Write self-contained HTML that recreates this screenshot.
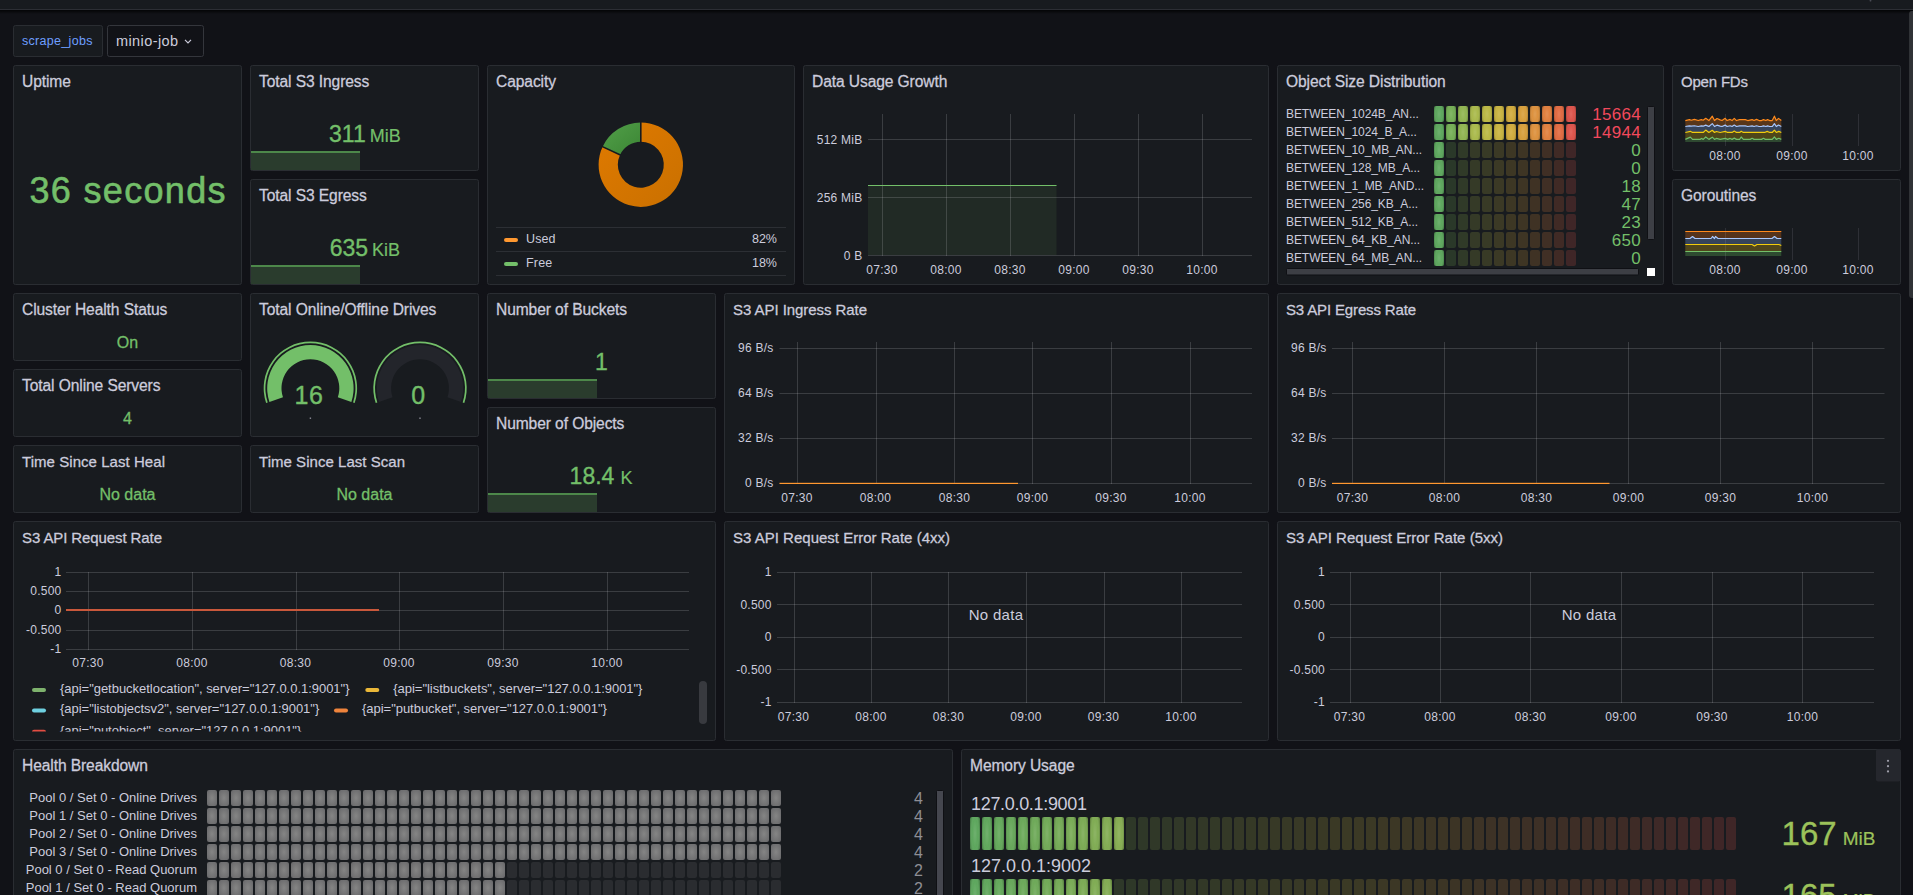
<!DOCTYPE html>
<html><head><meta charset="utf-8"><title>MinIO Dashboard</title>
<style>
html,body{margin:0;padding:0;background:#111217;overflow:hidden;width:1913px;height:895px}
svg{display:block;font-family:"Liberation Sans", sans-serif}
</style></head><body>
<svg width="1913" height="895" viewBox="0 0 1913 895">
<defs>
<linearGradient id="shadow" x1="0" y1="0" x2="0" y2="1"><stop offset="0" stop-color="#000" stop-opacity="0.6"/><stop offset="1" stop-color="#000" stop-opacity="0"/></linearGradient>
<linearGradient id="gOr" x1="0" y1="0" x2="1" y2="1"><stop offset="0" stop-color="#e07a00"/><stop offset="1" stop-color="#c97000"/></linearGradient>
<linearGradient id="gGr" x1="0" y1="0" x2="1" y2="1"><stop offset="0" stop-color="#52a049"/><stop offset="1" stop-color="#3b8534"/></linearGradient>
<radialGradient id="gGray" cx="0.5" cy="0.5" r="0.6"><stop offset="0" stop-color="#858585"/><stop offset="1" stop-color="#6b6b6d"/></radialGradient>
<radialGradient id="cellShade" cx="0.5" cy="0.5" r="0.5" gradientTransform="translate(0.5 0.5) scale(1 1.6) translate(-0.5 -0.5)"><stop offset="0" stop-color="#fff" stop-opacity="0.13"/><stop offset="0.55" stop-color="#fff" stop-opacity="0.02"/><stop offset="1" stop-color="#000" stop-opacity="0.18"/></radialGradient>
</defs>
<rect x="0" y="0" width="1913" height="895" fill="#111217"/>
<rect x="0" y="0" width="1913" height="9" fill="#181b1f"/>
<rect x="0" y="9" width="1913" height="1" fill="#2c2e34"/>
<rect x="0" y="10" width="1913" height="1" fill="#050608"/>
<rect x="0" y="11" width="1913" height="3" fill="url(#shadow)"/>
<rect x="1869.5" y="0" width="2" height="1.5" rx="0.7" fill="#4a4c55"/>
<rect x="1909" y="11" width="6" height="287" rx="3" fill="#303236"/>
<rect x="13.5" y="25.5" width="89" height="31" rx="2" fill="#181b1f" stroke="#2a2d32"/>
<text x="22" y="45" font-size="12.5" fill="#6e9fff" letter-spacing="0.3">scrape_jobs</text>
<rect x="107.5" y="25.5" width="96" height="31" rx="2" fill="#111217" stroke="#34363c"/>
<text x="116" y="45.5" font-size="14.5" fill="#ccccdc" letter-spacing="0.4">minio-job</text>
<path d="M185 39.8 L188 42.8 L191 39.8" fill="none" stroke="#ccccdc" stroke-width="1.2"/>
<rect x="13.5" y="65.5" width="228" height="219" rx="2" fill="#181b1f" stroke="#2a2d32" stroke-width="1"/>
<text x="22" y="87" font-size="15.6" fill="#ccccdc" letter-spacing="-0.1" stroke="#ccccdc" stroke-width="0.28">Uptime</text>
<rect x="250.5" y="65.5" width="228" height="105" rx="2" fill="#181b1f" stroke="#2a2d32" stroke-width="1"/>
<text x="259" y="87" font-size="15.6" fill="#ccccdc" letter-spacing="-0.1" stroke="#ccccdc" stroke-width="0.28">Total S3 Ingress</text>
<rect x="250.5" y="179.5" width="228" height="105" rx="2" fill="#181b1f" stroke="#2a2d32" stroke-width="1"/>
<text x="259" y="201" font-size="15.6" fill="#ccccdc" letter-spacing="-0.1" stroke="#ccccdc" stroke-width="0.28">Total S3 Egress</text>
<rect x="487.5" y="65.5" width="307" height="219" rx="2" fill="#181b1f" stroke="#2a2d32" stroke-width="1"/>
<text x="496" y="87" font-size="15.6" fill="#ccccdc" letter-spacing="-0.1" stroke="#ccccdc" stroke-width="0.28">Capacity</text>
<rect x="803.5" y="65.5" width="465" height="219" rx="2" fill="#181b1f" stroke="#2a2d32" stroke-width="1"/>
<text x="812" y="87" font-size="15.6" fill="#ccccdc" letter-spacing="-0.1" stroke="#ccccdc" stroke-width="0.28">Data Usage Growth</text>
<rect x="1277.5" y="65.5" width="386" height="219" rx="2" fill="#181b1f" stroke="#2a2d32" stroke-width="1"/>
<text x="1286" y="87" font-size="15.6" fill="#ccccdc" letter-spacing="-0.1" stroke="#ccccdc" stroke-width="0.28">Object Size Distribution</text>
<rect x="1672.5" y="65.5" width="228" height="105" rx="2" fill="#181b1f" stroke="#2a2d32" stroke-width="1"/>
<text x="1681" y="87" font-size="15.0" fill="#ccccdc" textLength="67" lengthAdjust="spacing" stroke="#ccccdc" stroke-width="0.28">Open FDs</text>
<rect x="1672.5" y="179.5" width="228" height="105" rx="2" fill="#181b1f" stroke="#2a2d32" stroke-width="1"/>
<text x="1681" y="201" font-size="15.6" fill="#ccccdc" letter-spacing="-0.1" stroke="#ccccdc" stroke-width="0.28">Goroutines</text>
<rect x="13.5" y="293.5" width="228" height="67" rx="2" fill="#181b1f" stroke="#2a2d32" stroke-width="1"/>
<text x="22" y="315" font-size="15.6" fill="#ccccdc" letter-spacing="-0.1" stroke="#ccccdc" stroke-width="0.28">Cluster Health Status</text>
<rect x="13.5" y="369.5" width="228" height="67" rx="2" fill="#181b1f" stroke="#2a2d32" stroke-width="1"/>
<text x="22" y="391" font-size="15.6" fill="#ccccdc" letter-spacing="-0.1" stroke="#ccccdc" stroke-width="0.28">Total Online Servers</text>
<rect x="13.5" y="445.5" width="228" height="67" rx="2" fill="#181b1f" stroke="#2a2d32" stroke-width="1"/>
<text x="22" y="467" font-size="15.0" fill="#ccccdc" textLength="143" lengthAdjust="spacing" stroke="#ccccdc" stroke-width="0.28">Time Since Last Heal</text>
<rect x="250.5" y="293.5" width="228" height="143" rx="2" fill="#181b1f" stroke="#2a2d32" stroke-width="1"/>
<text x="259" y="315" font-size="15.6" fill="#ccccdc" letter-spacing="-0.1" stroke="#ccccdc" stroke-width="0.28">Total Online/Offline Drives</text>
<rect x="250.5" y="445.5" width="228" height="67" rx="2" fill="#181b1f" stroke="#2a2d32" stroke-width="1"/>
<text x="259" y="467" font-size="15.0" fill="#ccccdc" textLength="146" lengthAdjust="spacing" stroke="#ccccdc" stroke-width="0.28">Time Since Last Scan</text>
<rect x="487.5" y="293.5" width="228" height="105" rx="2" fill="#181b1f" stroke="#2a2d32" stroke-width="1"/>
<text x="496" y="315" font-size="15.6" fill="#ccccdc" letter-spacing="-0.1" stroke="#ccccdc" stroke-width="0.28">Number of Buckets</text>
<rect x="487.5" y="407.5" width="228" height="105" rx="2" fill="#181b1f" stroke="#2a2d32" stroke-width="1"/>
<text x="496" y="429" font-size="15.6" fill="#ccccdc" letter-spacing="-0.1" stroke="#ccccdc" stroke-width="0.28">Number of Objects</text>
<rect x="724.5" y="293.5" width="544" height="219" rx="2" fill="#181b1f" stroke="#2a2d32" stroke-width="1"/>
<text x="733" y="315" font-size="15.0" fill="#ccccdc" textLength="134" lengthAdjust="spacing" stroke="#ccccdc" stroke-width="0.28">S3 API Ingress Rate</text>
<rect x="1277.5" y="293.5" width="623" height="219" rx="2" fill="#181b1f" stroke="#2a2d32" stroke-width="1"/>
<text x="1286" y="315" font-size="15.0" fill="#ccccdc" textLength="130" lengthAdjust="spacing" stroke="#ccccdc" stroke-width="0.28">S3 API Egress Rate</text>
<rect x="13.5" y="521.5" width="702" height="219" rx="2" fill="#181b1f" stroke="#2a2d32" stroke-width="1"/>
<text x="22" y="543" font-size="15.0" fill="#ccccdc" textLength="140" lengthAdjust="spacing" stroke="#ccccdc" stroke-width="0.28">S3 API Request Rate</text>
<rect x="724.5" y="521.5" width="544" height="219" rx="2" fill="#181b1f" stroke="#2a2d32" stroke-width="1"/>
<text x="733" y="543" font-size="15.0" fill="#ccccdc" textLength="217" lengthAdjust="spacing" stroke="#ccccdc" stroke-width="0.28">S3 API Request Error Rate (4xx)</text>
<rect x="1277.5" y="521.5" width="623" height="219" rx="2" fill="#181b1f" stroke="#2a2d32" stroke-width="1"/>
<text x="1286" y="543" font-size="15.0" fill="#ccccdc" textLength="217" lengthAdjust="spacing" stroke="#ccccdc" stroke-width="0.28">S3 API Request Error Rate (5xx)</text>
<rect x="13.5" y="749.5" width="939" height="219" rx="2" fill="#181b1f" stroke="#2a2d32" stroke-width="1"/>
<text x="22" y="771" font-size="15.6" fill="#ccccdc" letter-spacing="-0.1" stroke="#ccccdc" stroke-width="0.28">Health Breakdown</text>
<rect x="961.5" y="749.5" width="939" height="219" rx="2" fill="#181b1f" stroke="#2a2d32" stroke-width="1"/>
<text x="970" y="771" font-size="15.6" fill="#ccccdc" letter-spacing="-0.1" stroke="#ccccdc" stroke-width="0.28">Memory Usage</text>
<text x="127.5" y="203" font-size="36" fill="#73bf69" text-anchor="middle" textLength="196" lengthAdjust="spacing" stroke="#73bf69" stroke-width="0.6">36 seconds</text>
<rect x="251" y="153" width="109" height="17" fill="#2a3c2d"/>
<rect x="251" y="151" width="109" height="2" fill="#4d884a"/>
<text x="364.9" y="142.2" font-size="23" fill="#73bf69" stroke="#73bf69" stroke-width="0.35" text-anchor="middle" letter-spacing="0">311<tspan font-size="18" dx="4" stroke-width="0.2">MiB</tspan></text>
<rect x="251" y="267" width="109" height="17" fill="#2a3c2d"/>
<rect x="251" y="265" width="109" height="2" fill="#4d884a"/>
<text x="364.9" y="256.2" font-size="23" fill="#73bf69" stroke="#73bf69" stroke-width="0.35" text-anchor="middle" letter-spacing="0">635<tspan font-size="18" dx="4" stroke-width="0.2">KiB</tspan></text>
<path d="M640.80 122.50 A42.2 42.2 0 1 1 602.62 146.73 L619.99 154.91 A23 23 0 1 0 640.80 141.70 Z" fill="url(#gOr)"/>
<path d="M602.62 146.73 A42.2 42.2 0 0 1 640.80 122.50 L640.80 141.70 A23 23 0 0 0 619.99 154.91 Z" fill="url(#gGr)"/>
<line x1="640.80" y1="142.70" x2="640.80" y2="121.70" stroke="#181b1f" stroke-width="1.6"/>
<line x1="620.89" y1="155.33" x2="601.89" y2="146.39" stroke="#181b1f" stroke-width="1.6"/>
<rect x="496" y="227" width="290" height="1" fill="#2c2f34"/>
<rect x="496" y="251" width="290" height="1" fill="#2c2f34"/>
<rect x="496" y="275" width="290" height="1" fill="#2c2f34"/>
<rect x="504" y="238" width="14" height="4" fill="#ff9830" rx="2"/>
<text x="526" y="243" font-size="12.5" fill="#ccccdc" letter-spacing="0.1">Used</text>
<text x="777" y="243" font-size="12.5" fill="#ccccdc" text-anchor="end" letter-spacing="0">82%</text>
<rect x="504" y="262" width="14" height="4" fill="#73bf69" rx="2"/>
<text x="526" y="267" font-size="12.5" fill="#ccccdc" letter-spacing="0.2">Free</text>
<text x="777" y="267" font-size="12.5" fill="#ccccdc" text-anchor="end" letter-spacing="0">18%</text>
<rect x="868" y="185" width="188.5" height="70" fill="#212a25"/>
<rect x="868" y="139" width="384" height="1" fill="rgba(230,230,235,0.17)"/>
<rect x="868" y="197" width="384" height="1" fill="rgba(230,230,235,0.17)"/>
<rect x="868" y="255" width="384" height="1" fill="rgba(230,230,235,0.17)"/>
<rect x="882" y="114" width="1" height="142" fill="rgba(230,230,235,0.17)"/>
<rect x="946" y="114" width="1" height="142" fill="rgba(230,230,235,0.17)"/>
<rect x="1010" y="114" width="1" height="142" fill="rgba(230,230,235,0.17)"/>
<rect x="1074" y="114" width="1" height="142" fill="rgba(230,230,235,0.17)"/>
<rect x="1138" y="114" width="1" height="142" fill="rgba(230,230,235,0.17)"/>
<rect x="1202" y="114" width="1" height="142" fill="rgba(230,230,235,0.17)"/>
<rect x="868" y="185" width="188.5" height="1" fill="#73bf69"/>
<text x="862.5" y="143.5" font-size="12" fill="#ccccdc" text-anchor="end" letter-spacing="0.25">512 MiB</text>
<text x="862.5" y="201.5" font-size="12" fill="#ccccdc" text-anchor="end" letter-spacing="0.25">256 MiB</text>
<text x="862.5" y="259.5" font-size="12" fill="#ccccdc" text-anchor="end" letter-spacing="0.25">0 B</text>
<text x="882" y="274" font-size="12" fill="#ccccdc" text-anchor="middle" letter-spacing="0.25">07:30</text>
<text x="946" y="274" font-size="12" fill="#ccccdc" text-anchor="middle" letter-spacing="0.25">08:00</text>
<text x="1010" y="274" font-size="12" fill="#ccccdc" text-anchor="middle" letter-spacing="0.25">08:30</text>
<text x="1074" y="274" font-size="12" fill="#ccccdc" text-anchor="middle" letter-spacing="0.25">09:00</text>
<text x="1138" y="274" font-size="12" fill="#ccccdc" text-anchor="middle" letter-spacing="0.25">09:30</text>
<text x="1202" y="274" font-size="12" fill="#ccccdc" text-anchor="middle" letter-spacing="0.25">10:00</text>
<text x="1286" y="118" font-size="12" fill="#ccccdc" letter-spacing="-0.07">BETWEEN_1024B_AN...</text>
<rect x="1434" y="106" width="10" height="16" fill="#5aa55a" rx="2"/>
<rect x="1434" y="106" width="10" height="16" rx="2" fill="url(#cellShade)"/>
<rect x="1446" y="106" width="10" height="16" fill="#72ad52" rx="2"/>
<rect x="1446" y="106" width="10" height="16" rx="2" fill="url(#cellShade)"/>
<rect x="1458" y="106" width="10" height="16" fill="#8fb44e" rx="2"/>
<rect x="1458" y="106" width="10" height="16" rx="2" fill="url(#cellShade)"/>
<rect x="1470" y="106" width="10" height="16" fill="#a8b848" rx="2"/>
<rect x="1470" y="106" width="10" height="16" rx="2" fill="url(#cellShade)"/>
<rect x="1482" y="106" width="10" height="16" fill="#bab741" rx="2"/>
<rect x="1482" y="106" width="10" height="16" rx="2" fill="url(#cellShade)"/>
<rect x="1494" y="106" width="10" height="16" fill="#c7b23d" rx="2"/>
<rect x="1494" y="106" width="10" height="16" rx="2" fill="url(#cellShade)"/>
<rect x="1506" y="106" width="10" height="16" fill="#d0a939" rx="2"/>
<rect x="1506" y="106" width="10" height="16" rx="2" fill="url(#cellShade)"/>
<rect x="1518" y="106" width="10" height="16" fill="#d79e38" rx="2"/>
<rect x="1518" y="106" width="10" height="16" rx="2" fill="url(#cellShade)"/>
<rect x="1530" y="106" width="10" height="16" fill="#dc8f3a" rx="2"/>
<rect x="1530" y="106" width="10" height="16" rx="2" fill="url(#cellShade)"/>
<rect x="1542" y="106" width="10" height="16" fill="#df7d3b" rx="2"/>
<rect x="1542" y="106" width="10" height="16" rx="2" fill="url(#cellShade)"/>
<rect x="1554" y="106" width="10" height="16" fill="#e0683e" rx="2"/>
<rect x="1554" y="106" width="10" height="16" rx="2" fill="url(#cellShade)"/>
<rect x="1566" y="106" width="10" height="16" fill="#dc5047" rx="2"/>
<rect x="1566" y="106" width="10" height="16" rx="2" fill="url(#cellShade)"/>
<text x="1641" y="119.5" font-size="17" fill="#f2495c" text-anchor="end" letter-spacing="0.3">15664</text>
<text x="1286" y="136" font-size="12" fill="#ccccdc" letter-spacing="-0.07">BETWEEN_1024_B_A...</text>
<rect x="1434" y="124" width="10" height="16" fill="#5aa55a" rx="2"/>
<rect x="1434" y="124" width="10" height="16" rx="2" fill="url(#cellShade)"/>
<rect x="1446" y="124" width="10" height="16" fill="#72ad52" rx="2"/>
<rect x="1446" y="124" width="10" height="16" rx="2" fill="url(#cellShade)"/>
<rect x="1458" y="124" width="10" height="16" fill="#8fb44e" rx="2"/>
<rect x="1458" y="124" width="10" height="16" rx="2" fill="url(#cellShade)"/>
<rect x="1470" y="124" width="10" height="16" fill="#a8b848" rx="2"/>
<rect x="1470" y="124" width="10" height="16" rx="2" fill="url(#cellShade)"/>
<rect x="1482" y="124" width="10" height="16" fill="#bab741" rx="2"/>
<rect x="1482" y="124" width="10" height="16" rx="2" fill="url(#cellShade)"/>
<rect x="1494" y="124" width="10" height="16" fill="#c7b23d" rx="2"/>
<rect x="1494" y="124" width="10" height="16" rx="2" fill="url(#cellShade)"/>
<rect x="1506" y="124" width="10" height="16" fill="#d0a939" rx="2"/>
<rect x="1506" y="124" width="10" height="16" rx="2" fill="url(#cellShade)"/>
<rect x="1518" y="124" width="10" height="16" fill="#d79e38" rx="2"/>
<rect x="1518" y="124" width="10" height="16" rx="2" fill="url(#cellShade)"/>
<rect x="1530" y="124" width="10" height="16" fill="#dc8f3a" rx="2"/>
<rect x="1530" y="124" width="10" height="16" rx="2" fill="url(#cellShade)"/>
<rect x="1542" y="124" width="10" height="16" fill="#df7d3b" rx="2"/>
<rect x="1542" y="124" width="10" height="16" rx="2" fill="url(#cellShade)"/>
<rect x="1554" y="124" width="10" height="16" fill="#e0683e" rx="2"/>
<rect x="1554" y="124" width="10" height="16" rx="2" fill="url(#cellShade)"/>
<rect x="1566" y="124" width="10" height="16" fill="#dc5047" rx="2"/>
<rect x="1566" y="124" width="10" height="16" rx="2" fill="url(#cellShade)"/>
<text x="1641" y="137.5" font-size="17" fill="#f2495c" text-anchor="end" letter-spacing="0.3">14944</text>
<text x="1286" y="154" font-size="12" fill="#ccccdc" letter-spacing="-0.07">BETWEEN_10_MB_AN...</text>
<rect x="1434" y="142" width="10" height="16" fill="#5aa55a" rx="2"/>
<rect x="1434" y="142" width="10" height="16" rx="2" fill="url(#cellShade)"/>
<rect x="1446" y="142" width="10" height="16" fill="#2a3829" rx="2"/>
<rect x="1458" y="142" width="10" height="16" fill="#303a28" rx="2"/>
<rect x="1470" y="142" width="10" height="16" fill="#353a27" rx="2"/>
<rect x="1482" y="142" width="10" height="16" fill="#383a26" rx="2"/>
<rect x="1494" y="142" width="10" height="16" fill="#3b3925" rx="2"/>
<rect x="1506" y="142" width="10" height="16" fill="#3d3724" rx="2"/>
<rect x="1518" y="142" width="10" height="16" fill="#3e3524" rx="2"/>
<rect x="1530" y="142" width="10" height="16" fill="#3f3224" rx="2"/>
<rect x="1542" y="142" width="10" height="16" fill="#402f25" rx="2"/>
<rect x="1554" y="142" width="10" height="16" fill="#402a25" rx="2"/>
<rect x="1566" y="142" width="10" height="16" fill="#3f2627" rx="2"/>
<text x="1641" y="155.5" font-size="17" fill="#73bf69" text-anchor="end" letter-spacing="0.3">0</text>
<text x="1286" y="172" font-size="12" fill="#ccccdc" letter-spacing="-0.07">BETWEEN_128_MB_A...</text>
<rect x="1434" y="160" width="10" height="16" fill="#5aa55a" rx="2"/>
<rect x="1434" y="160" width="10" height="16" rx="2" fill="url(#cellShade)"/>
<rect x="1446" y="160" width="10" height="16" fill="#2a3829" rx="2"/>
<rect x="1458" y="160" width="10" height="16" fill="#303a28" rx="2"/>
<rect x="1470" y="160" width="10" height="16" fill="#353a27" rx="2"/>
<rect x="1482" y="160" width="10" height="16" fill="#383a26" rx="2"/>
<rect x="1494" y="160" width="10" height="16" fill="#3b3925" rx="2"/>
<rect x="1506" y="160" width="10" height="16" fill="#3d3724" rx="2"/>
<rect x="1518" y="160" width="10" height="16" fill="#3e3524" rx="2"/>
<rect x="1530" y="160" width="10" height="16" fill="#3f3224" rx="2"/>
<rect x="1542" y="160" width="10" height="16" fill="#402f25" rx="2"/>
<rect x="1554" y="160" width="10" height="16" fill="#402a25" rx="2"/>
<rect x="1566" y="160" width="10" height="16" fill="#3f2627" rx="2"/>
<text x="1641" y="173.5" font-size="17" fill="#73bf69" text-anchor="end" letter-spacing="0.3">0</text>
<text x="1286" y="190" font-size="12" fill="#ccccdc" letter-spacing="-0.07">BETWEEN_1_MB_AND...</text>
<rect x="1434" y="178" width="10" height="16" fill="#5aa55a" rx="2"/>
<rect x="1434" y="178" width="10" height="16" rx="2" fill="url(#cellShade)"/>
<rect x="1446" y="178" width="10" height="16" fill="#2a3829" rx="2"/>
<rect x="1458" y="178" width="10" height="16" fill="#303a28" rx="2"/>
<rect x="1470" y="178" width="10" height="16" fill="#353a27" rx="2"/>
<rect x="1482" y="178" width="10" height="16" fill="#383a26" rx="2"/>
<rect x="1494" y="178" width="10" height="16" fill="#3b3925" rx="2"/>
<rect x="1506" y="178" width="10" height="16" fill="#3d3724" rx="2"/>
<rect x="1518" y="178" width="10" height="16" fill="#3e3524" rx="2"/>
<rect x="1530" y="178" width="10" height="16" fill="#3f3224" rx="2"/>
<rect x="1542" y="178" width="10" height="16" fill="#402f25" rx="2"/>
<rect x="1554" y="178" width="10" height="16" fill="#402a25" rx="2"/>
<rect x="1566" y="178" width="10" height="16" fill="#3f2627" rx="2"/>
<text x="1641" y="191.5" font-size="17" fill="#73bf69" text-anchor="end" letter-spacing="0.3">18</text>
<text x="1286" y="208" font-size="12" fill="#ccccdc" letter-spacing="-0.07">BETWEEN_256_KB_A...</text>
<rect x="1434" y="196" width="10" height="16" fill="#5aa55a" rx="2"/>
<rect x="1434" y="196" width="10" height="16" rx="2" fill="url(#cellShade)"/>
<rect x="1446" y="196" width="10" height="16" fill="#2a3829" rx="2"/>
<rect x="1458" y="196" width="10" height="16" fill="#303a28" rx="2"/>
<rect x="1470" y="196" width="10" height="16" fill="#353a27" rx="2"/>
<rect x="1482" y="196" width="10" height="16" fill="#383a26" rx="2"/>
<rect x="1494" y="196" width="10" height="16" fill="#3b3925" rx="2"/>
<rect x="1506" y="196" width="10" height="16" fill="#3d3724" rx="2"/>
<rect x="1518" y="196" width="10" height="16" fill="#3e3524" rx="2"/>
<rect x="1530" y="196" width="10" height="16" fill="#3f3224" rx="2"/>
<rect x="1542" y="196" width="10" height="16" fill="#402f25" rx="2"/>
<rect x="1554" y="196" width="10" height="16" fill="#402a25" rx="2"/>
<rect x="1566" y="196" width="10" height="16" fill="#3f2627" rx="2"/>
<text x="1641" y="209.5" font-size="17" fill="#73bf69" text-anchor="end" letter-spacing="0.3">47</text>
<text x="1286" y="226" font-size="12" fill="#ccccdc" letter-spacing="-0.07">BETWEEN_512_KB_A...</text>
<rect x="1434" y="214" width="10" height="16" fill="#5aa55a" rx="2"/>
<rect x="1434" y="214" width="10" height="16" rx="2" fill="url(#cellShade)"/>
<rect x="1446" y="214" width="10" height="16" fill="#2a3829" rx="2"/>
<rect x="1458" y="214" width="10" height="16" fill="#303a28" rx="2"/>
<rect x="1470" y="214" width="10" height="16" fill="#353a27" rx="2"/>
<rect x="1482" y="214" width="10" height="16" fill="#383a26" rx="2"/>
<rect x="1494" y="214" width="10" height="16" fill="#3b3925" rx="2"/>
<rect x="1506" y="214" width="10" height="16" fill="#3d3724" rx="2"/>
<rect x="1518" y="214" width="10" height="16" fill="#3e3524" rx="2"/>
<rect x="1530" y="214" width="10" height="16" fill="#3f3224" rx="2"/>
<rect x="1542" y="214" width="10" height="16" fill="#402f25" rx="2"/>
<rect x="1554" y="214" width="10" height="16" fill="#402a25" rx="2"/>
<rect x="1566" y="214" width="10" height="16" fill="#3f2627" rx="2"/>
<text x="1641" y="227.5" font-size="17" fill="#73bf69" text-anchor="end" letter-spacing="0.3">23</text>
<text x="1286" y="244" font-size="12" fill="#ccccdc" letter-spacing="-0.07">BETWEEN_64_KB_AN...</text>
<rect x="1434" y="232" width="10" height="16" fill="#5aa55a" rx="2"/>
<rect x="1434" y="232" width="10" height="16" rx="2" fill="url(#cellShade)"/>
<rect x="1446" y="232" width="10" height="16" fill="#2a3829" rx="2"/>
<rect x="1458" y="232" width="10" height="16" fill="#303a28" rx="2"/>
<rect x="1470" y="232" width="10" height="16" fill="#353a27" rx="2"/>
<rect x="1482" y="232" width="10" height="16" fill="#383a26" rx="2"/>
<rect x="1494" y="232" width="10" height="16" fill="#3b3925" rx="2"/>
<rect x="1506" y="232" width="10" height="16" fill="#3d3724" rx="2"/>
<rect x="1518" y="232" width="10" height="16" fill="#3e3524" rx="2"/>
<rect x="1530" y="232" width="10" height="16" fill="#3f3224" rx="2"/>
<rect x="1542" y="232" width="10" height="16" fill="#402f25" rx="2"/>
<rect x="1554" y="232" width="10" height="16" fill="#402a25" rx="2"/>
<rect x="1566" y="232" width="10" height="16" fill="#3f2627" rx="2"/>
<text x="1641" y="245.5" font-size="17" fill="#73bf69" text-anchor="end" letter-spacing="0.3">650</text>
<text x="1286" y="262" font-size="12" fill="#ccccdc" letter-spacing="-0.07">BETWEEN_64_MB_AN...</text>
<rect x="1434" y="250" width="10" height="16" fill="#5aa55a" rx="2"/>
<rect x="1434" y="250" width="10" height="16" rx="2" fill="url(#cellShade)"/>
<rect x="1446" y="250" width="10" height="16" fill="#2a3829" rx="2"/>
<rect x="1458" y="250" width="10" height="16" fill="#303a28" rx="2"/>
<rect x="1470" y="250" width="10" height="16" fill="#353a27" rx="2"/>
<rect x="1482" y="250" width="10" height="16" fill="#383a26" rx="2"/>
<rect x="1494" y="250" width="10" height="16" fill="#3b3925" rx="2"/>
<rect x="1506" y="250" width="10" height="16" fill="#3d3724" rx="2"/>
<rect x="1518" y="250" width="10" height="16" fill="#3e3524" rx="2"/>
<rect x="1530" y="250" width="10" height="16" fill="#3f3224" rx="2"/>
<rect x="1542" y="250" width="10" height="16" fill="#402f25" rx="2"/>
<rect x="1554" y="250" width="10" height="16" fill="#402a25" rx="2"/>
<rect x="1566" y="250" width="10" height="16" fill="#3f2627" rx="2"/>
<text x="1641" y="263.5" font-size="17" fill="#73bf69" text-anchor="end" letter-spacing="0.3">0</text>
<rect x="1647.5" y="106.5" width="7" height="133" rx="1" fill="#3d3f45" stroke="#0f1014" stroke-width="1"/>
<rect x="1286.5" y="268.5" width="352" height="6.5" rx="1" fill="#3d3f45" stroke="#0f1014" stroke-width="1"/>
<rect x="1647" y="268" width="8" height="8" fill="#ffffff"/>
<path d="M1685.33 120.55 L1689.41 119.61 L1691.29 120.23 L1694.43 119.42 L1698.19 120.55 L1701.33 119.61 L1703.21 120.23 L1705.72 118.35 L1708.86 120.55 L1712.31 116.16 L1714.50 120.55 L1717.01 118.54 L1720.15 119.92 L1722.03 120.55 L1725.17 118.35 L1727.05 120.55 L1730.19 119.42 L1732.07 120.55 L1734.27 118.35 L1736.46 120.55 L1739.60 119.61 L1742.11 119.61 L1745.24 119.61 L1747.75 120.55 L1752.15 119.61 L1754.03 120.55 L1756.54 119.42 L1759.05 120.55 L1761.56 120.55 L1763.44 119.61 L1765.95 120.55 L1767.52 119.61 L1769.71 120.55 L1772.22 120.55 L1774.42 116.16 L1776.30 120.55 L1778.49 118.35 L1781.32 120.55 L1781.32 126.51 L1778.49 125.08 L1776.30 126.51 L1774.42 123.65 L1772.22 126.51 L1769.71 126.51 L1767.52 125.90 L1765.95 126.51 L1763.44 125.90 L1761.56 126.51 L1759.05 126.51 L1756.54 125.77 L1754.03 126.51 L1752.15 125.90 L1747.75 126.51 L1745.24 125.90 L1742.11 125.90 L1739.60 125.90 L1736.46 126.51 L1734.27 125.08 L1732.07 126.51 L1730.19 125.77 L1727.05 126.51 L1725.17 125.08 L1722.03 126.51 L1720.15 126.10 L1717.01 125.20 L1714.50 126.51 L1712.31 123.65 L1708.86 126.51 L1705.72 125.08 L1703.21 126.19 L1701.33 125.90 L1698.19 126.51 L1694.43 125.77 L1691.29 126.19 L1689.41 125.90 L1685.33 126.51 Z" fill="#58361a"/>
<path d="M1685.33 126.51 L1689.41 125.90 L1691.29 126.19 L1694.43 125.77 L1698.19 126.51 L1701.33 125.90 L1703.21 126.19 L1705.72 125.08 L1708.86 126.51 L1712.31 123.65 L1714.50 126.51 L1717.01 125.20 L1720.15 126.10 L1722.03 126.51 L1725.17 125.08 L1727.05 126.51 L1730.19 125.77 L1732.07 126.51 L1734.27 125.08 L1736.46 126.51 L1739.60 125.90 L1742.11 125.90 L1745.24 125.90 L1747.75 126.51 L1752.15 125.90 L1754.03 126.51 L1756.54 125.77 L1759.05 126.51 L1761.56 126.51 L1763.44 125.90 L1765.95 126.51 L1767.52 125.90 L1769.71 126.51 L1772.22 126.51 L1774.42 123.65 L1776.30 126.51 L1778.49 125.08 L1781.32 126.51 L1781.32 132.47 L1778.81 131.34 L1776.30 132.47 L1774.42 130.08 L1772.22 132.47 L1769.71 132.47 L1767.20 131.34 L1764.69 132.47 L1743.36 132.47 L1741.17 131.21 L1739.60 132.47 L1736.46 132.47 L1734.27 131.09 L1732.07 132.47 L1727.68 132.47 L1725.17 131.34 L1720.15 132.47 L1716.39 131.53 L1714.50 132.47 L1712.31 130.27 L1708.86 132.47 L1705.72 130.08 L1703.21 132.47 L1692.55 132.47 L1690.35 131.34 L1685.33 132.47 Z" fill="#36445c"/>
<path d="M1685.33 132.47 L1690.35 131.34 L1692.55 132.47 L1703.21 132.47 L1705.72 130.08 L1708.86 132.47 L1712.31 130.27 L1714.50 132.47 L1716.39 131.53 L1720.15 132.47 L1725.17 131.34 L1727.68 132.47 L1732.07 132.47 L1734.27 131.09 L1736.46 132.47 L1739.60 132.47 L1741.17 131.21 L1743.36 132.47 L1764.69 132.47 L1767.20 131.34 L1769.71 132.47 L1772.22 132.47 L1774.42 130.08 L1776.30 132.47 L1778.81 131.34 L1781.32 132.47 L1781.32 139.37 L1778.81 138.24 L1776.30 139.37 L1774.42 136.98 L1772.22 139.37 L1765.32 139.37 L1763.44 138.24 L1761.56 139.37 L1754.03 139.37 L1752.15 138.24 L1750.26 139.37 L1743.36 139.37 L1741.17 136.98 L1739.60 139.37 L1736.46 139.37 L1734.27 138.11 L1732.07 139.37 L1730.19 138.43 L1727.68 139.37 L1725.17 138.43 L1720.15 139.37 L1716.39 138.43 L1714.50 139.37 L1712.31 137.17 L1708.86 139.37 L1705.72 136.98 L1703.21 139.37 L1701.64 138.43 L1700.08 139.37 L1692.55 139.37 L1690.35 137.17 L1685.33 139.37 Z" fill="#4f4619"/>
<path d="M1685.33 139.37 L1690.35 137.17 L1692.55 139.37 L1700.08 139.37 L1701.64 138.43 L1703.21 139.37 L1705.72 136.98 L1708.86 139.37 L1712.31 137.17 L1714.50 139.37 L1716.39 138.43 L1720.15 139.37 L1725.17 138.43 L1727.68 139.37 L1730.19 138.43 L1732.07 139.37 L1734.27 138.11 L1736.46 139.37 L1739.60 139.37 L1741.17 136.98 L1743.36 139.37 L1750.26 139.37 L1752.15 138.24 L1754.03 139.37 L1761.56 139.37 L1763.44 138.24 L1765.32 139.37 L1772.22 139.37 L1774.42 136.98 L1776.30 139.37 L1778.81 138.24 L1781.32 139.37 L1781.30 141.90 L1685.30 141.90 Z" fill="#2e4830"/>
<rect x="1725" y="114" width="1" height="32" fill="rgba(204,204,220,0.12)"/>
<rect x="1792" y="114" width="1" height="32" fill="rgba(204,204,220,0.12)"/>
<rect x="1858" y="114" width="1" height="32" fill="rgba(204,204,220,0.12)"/>
<path d="M1685.33 120.55 L1689.41 119.61 L1691.29 120.23 L1694.43 119.42 L1698.19 120.55 L1701.33 119.61 L1703.21 120.23 L1705.72 118.35 L1708.86 120.55 L1712.31 116.16 L1714.50 120.55 L1717.01 118.54 L1720.15 119.92 L1722.03 120.55 L1725.17 118.35 L1727.05 120.55 L1730.19 119.42 L1732.07 120.55 L1734.27 118.35 L1736.46 120.55 L1739.60 119.61 L1742.11 119.61 L1745.24 119.61 L1747.75 120.55 L1752.15 119.61 L1754.03 120.55 L1756.54 119.42 L1759.05 120.55 L1761.56 120.55 L1763.44 119.61 L1765.95 120.55 L1767.52 119.61 L1769.71 120.55 L1772.22 120.55 L1774.42 116.16 L1776.30 120.55 L1778.49 118.35 L1781.32 120.55" fill="none" stroke="#ff8a1c" stroke-width="1.2" stroke-linejoin="round"/>
<path d="M1685.33 126.51 L1689.41 125.90 L1691.29 126.19 L1694.43 125.77 L1698.19 126.51 L1701.33 125.90 L1703.21 126.19 L1705.72 125.08 L1708.86 126.51 L1712.31 123.65 L1714.50 126.51 L1717.01 125.20 L1720.15 126.10 L1722.03 126.51 L1725.17 125.08 L1727.05 126.51 L1730.19 125.77 L1732.07 126.51 L1734.27 125.08 L1736.46 126.51 L1739.60 125.90 L1742.11 125.90 L1745.24 125.90 L1747.75 126.51 L1752.15 125.90 L1754.03 126.51 L1756.54 125.77 L1759.05 126.51 L1761.56 126.51 L1763.44 125.90 L1765.95 126.51 L1767.52 125.90 L1769.71 126.51 L1772.22 126.51 L1774.42 123.65 L1776.30 126.51 L1778.49 125.08 L1781.32 126.51" fill="none" stroke="#a8c8ff" stroke-width="1.2" stroke-linejoin="round"/>
<path d="M1685.33 132.47 L1690.35 131.34 L1692.55 132.47 L1703.21 132.47 L1705.72 130.08 L1708.86 132.47 L1712.31 130.27 L1714.50 132.47 L1716.39 131.53 L1720.15 132.47 L1725.17 131.34 L1727.68 132.47 L1732.07 132.47 L1734.27 131.09 L1736.46 132.47 L1739.60 132.47 L1741.17 131.21 L1743.36 132.47 L1764.69 132.47 L1767.20 131.34 L1769.71 132.47 L1772.22 132.47 L1774.42 130.08 L1776.30 132.47 L1778.81 131.34 L1781.32 132.47" fill="none" stroke="#f2cc0c" stroke-width="1.2" stroke-linejoin="round"/>
<path d="M1685.33 139.37 L1690.35 137.17 L1692.55 139.37 L1700.08 139.37 L1701.64 138.43 L1703.21 139.37 L1705.72 136.98 L1708.86 139.37 L1712.31 137.17 L1714.50 139.37 L1716.39 138.43 L1720.15 139.37 L1725.17 138.43 L1727.68 139.37 L1730.19 138.43 L1732.07 139.37 L1734.27 138.11 L1736.46 139.37 L1739.60 139.37 L1741.17 136.98 L1743.36 139.37 L1750.26 139.37 L1752.15 138.24 L1754.03 139.37 L1761.56 139.37 L1763.44 138.24 L1765.32 139.37 L1772.22 139.37 L1774.42 136.98 L1776.30 139.37 L1778.81 138.24 L1781.32 139.37" fill="none" stroke="#73bf69" stroke-width="1.2" stroke-linejoin="round"/>
<text x="1725" y="159.7" font-size="12" fill="#ccccdc" text-anchor="middle" letter-spacing="0.25">08:00</text>
<text x="1792" y="159.7" font-size="12" fill="#ccccdc" text-anchor="middle" letter-spacing="0.25">09:00</text>
<text x="1858" y="159.7" font-size="12" fill="#ccccdc" text-anchor="middle" letter-spacing="0.25">10:00</text>
<path d="M1685.30 231.50 L1781.30 231.50 L1781.30 238.50 L1777.00 238.50 L1774.50 236.50 L1772.00 238.50 L1718.00 238.50 L1715.50 236.50 L1714.50 238.50 L1712.50 236.50 L1711.00 238.50 L1695.00 238.50 L1692.50 236.50 L1690.00 238.50 L1685.30 238.50 Z" fill="#55331b"/>
<path d="M1685.30 238.50 L1690.00 238.50 L1692.50 236.50 L1695.00 238.50 L1711.00 238.50 L1712.50 236.50 L1714.50 238.50 L1715.50 236.50 L1718.00 238.50 L1772.00 238.50 L1774.50 236.50 L1777.00 238.50 L1781.30 238.50 L1781.30 245.50 L1779.00 244.50 L1757.00 244.50 L1754.50 246.00 L1752.00 244.50 L1685.30 244.50 Z" fill="#35435a"/>
<path d="M1685.30 244.50 L1752.00 244.50 L1754.50 246.00 L1757.00 244.50 L1779.00 244.50 L1781.30 245.50 L1781.30 251.50 L1685.30 251.50 Z" fill="#50461c"/>
<path d="M1685.30 251.50 L1781.30 251.50 L1781.30 255.90 L1685.30 255.90 Z" fill="#2e4a30"/>
<rect x="1725" y="228" width="1" height="32" fill="rgba(204,204,220,0.12)"/>
<rect x="1792" y="228" width="1" height="32" fill="rgba(204,204,220,0.12)"/>
<rect x="1858" y="228" width="1" height="32" fill="rgba(204,204,220,0.12)"/>
<path d="M1685.30 231.50 L1781.30 231.50" fill="none" stroke="#ff8a1c" stroke-width="1.2" stroke-linejoin="round"/>
<path d="M1685.30 238.50 L1690.00 238.50 L1692.50 236.50 L1695.00 238.50 L1711.00 238.50 L1712.50 236.50 L1714.50 238.50 L1715.50 236.50 L1718.00 238.50 L1772.00 238.50 L1774.50 236.50 L1777.00 238.50 L1781.30 238.50" fill="none" stroke="#a8c8ff" stroke-width="1.2" stroke-linejoin="round"/>
<path d="M1685.30 244.50 L1752.00 244.50 L1754.50 246.00 L1757.00 244.50 L1779.00 244.50 L1781.30 245.50" fill="none" stroke="#f2cc0c" stroke-width="1.2" stroke-linejoin="round"/>
<path d="M1685.30 251.50 L1781.30 251.50" fill="none" stroke="#73bf69" stroke-width="1.2" stroke-linejoin="round"/>
<text x="1725" y="273.5" font-size="12" fill="#ccccdc" text-anchor="middle" letter-spacing="0.25">08:00</text>
<text x="1792" y="273.5" font-size="12" fill="#ccccdc" text-anchor="middle" letter-spacing="0.25">09:00</text>
<text x="1858" y="273.5" font-size="12" fill="#ccccdc" text-anchor="middle" letter-spacing="0.25">10:00</text>
<text x="127.5" y="348" font-size="16" fill="#73bf69" text-anchor="middle" letter-spacing="0.2" stroke="#73bf69" stroke-width="0.3">On</text>
<text x="127.5" y="424.3" font-size="16" fill="#73bf69" text-anchor="middle" stroke="#73bf69" stroke-width="0.3">4</text>
<text x="127.5" y="500.3" font-size="16" fill="#73bf69" text-anchor="middle" stroke="#73bf69" stroke-width="0.3">No data</text>
<text x="364.5" y="500.3" font-size="16" fill="#73bf69" text-anchor="middle" stroke="#73bf69" stroke-width="0.3">No data</text>
<path d="M266.11 403.02 A46.7 46.7 0 1 1 354.69 403.02 L353.07 402.48 A45.0 45.0 0 1 0 267.73 402.48 Z" fill="#73bf69"/>
<path d="M269.43 401.91 A43.2 43.2 0 1 1 351.37 401.91 L337.81 397.37 A28.9 28.9 0 1 0 282.99 397.37 Z" fill="#73bf69"/>
<text x="308.9" y="404.2" font-size="25" fill="#73bf69" text-anchor="middle" letter-spacing="0.5" stroke="#73bf69" stroke-width="0.4">16</text>
<rect x="309.7" y="417.5" width="1.4" height="1.4" fill="#8e8e99"/>
<path d="M375.71 403.02 A46.7 46.7 0 1 1 464.29 403.02 L462.67 402.48 A45.0 45.0 0 1 0 377.33 402.48 Z" fill="#73bf69"/>
<path d="M379.03 401.91 A43.2 43.2 0 1 1 460.97 401.91 L447.41 397.37 A28.9 28.9 0 1 0 392.59 397.37 Z" fill="#23252b"/>
<text x="418.5" y="404.2" font-size="25" fill="#73bf69" text-anchor="middle" letter-spacing="0.5" stroke="#73bf69" stroke-width="0.4">0</text>
<rect x="419.3" y="417.5" width="1.4" height="1.4" fill="#8e8e99"/>
<rect x="488" y="381" width="109" height="17" fill="#2a3c2d"/>
<rect x="488" y="379" width="109" height="2" fill="#4d884a"/>
<text x="601.5" y="370" font-size="23" fill="#73bf69" text-anchor="middle" stroke="#73bf69" stroke-width="0.35">1</text>
<rect x="488" y="495" width="109" height="17" fill="#2a3c2d"/>
<rect x="488" y="493" width="109" height="2" fill="#4d884a"/>
<text x="601" y="484" font-size="23" fill="#73bf69" stroke="#73bf69" stroke-width="0.35" text-anchor="middle" letter-spacing="0">18.4<tspan font-size="18" dx="6" stroke-width="0.2">K</tspan></text>
<rect x="779.5" y="348" width="472.5" height="1" fill="rgba(230,230,235,0.17)"/>
<rect x="779.5" y="393" width="472.5" height="1" fill="rgba(230,230,235,0.17)"/>
<rect x="779.5" y="438" width="472.5" height="1" fill="rgba(230,230,235,0.17)"/>
<rect x="779.5" y="483" width="472.5" height="1" fill="rgba(230,230,235,0.17)"/>
<rect x="797" y="342" width="1" height="142" fill="rgba(230,230,235,0.17)"/>
<rect x="876" y="342" width="1" height="142" fill="rgba(230,230,235,0.17)"/>
<rect x="954" y="342" width="1" height="142" fill="rgba(230,230,235,0.17)"/>
<rect x="1032" y="342" width="1" height="142" fill="rgba(230,230,235,0.17)"/>
<rect x="1111" y="342" width="1" height="142" fill="rgba(230,230,235,0.17)"/>
<rect x="1190" y="342" width="1" height="142" fill="rgba(230,230,235,0.17)"/>
<text x="773.6" y="352.3" font-size="12" fill="#ccccdc" text-anchor="end" letter-spacing="0.25">96 B/s</text>
<text x="773.6" y="397.3" font-size="12" fill="#ccccdc" text-anchor="end" letter-spacing="0.25">64 B/s</text>
<text x="773.6" y="442.3" font-size="12" fill="#ccccdc" text-anchor="end" letter-spacing="0.25">32 B/s</text>
<text x="773.6" y="487.3" font-size="12" fill="#ccccdc" text-anchor="end" letter-spacing="0.25">0 B/s</text>
<text x="797" y="501.6" font-size="12" fill="#ccccdc" text-anchor="middle" letter-spacing="0.25">07:30</text>
<text x="875.5" y="501.6" font-size="12" fill="#ccccdc" text-anchor="middle" letter-spacing="0.25">08:00</text>
<text x="954.5" y="501.6" font-size="12" fill="#ccccdc" text-anchor="middle" letter-spacing="0.25">08:30</text>
<text x="1032.5" y="501.6" font-size="12" fill="#ccccdc" text-anchor="middle" letter-spacing="0.25">09:00</text>
<text x="1111" y="501.6" font-size="12" fill="#ccccdc" text-anchor="middle" letter-spacing="0.25">09:30</text>
<text x="1190" y="501.6" font-size="12" fill="#ccccdc" text-anchor="middle" letter-spacing="0.25">10:00</text>
<rect x="779.5" y="482.8" width="238.5" height="1.2" fill="#ff9830"/>
<rect x="1332" y="348" width="552.5" height="1" fill="rgba(230,230,235,0.17)"/>
<rect x="1332" y="393" width="552.5" height="1" fill="rgba(230,230,235,0.17)"/>
<rect x="1332" y="438" width="552.5" height="1" fill="rgba(230,230,235,0.17)"/>
<rect x="1332" y="483" width="552.5" height="1" fill="rgba(230,230,235,0.17)"/>
<rect x="1352" y="342" width="1" height="142" fill="rgba(230,230,235,0.17)"/>
<rect x="1444" y="342" width="1" height="142" fill="rgba(230,230,235,0.17)"/>
<rect x="1536" y="342" width="1" height="142" fill="rgba(230,230,235,0.17)"/>
<rect x="1628" y="342" width="1" height="142" fill="rgba(230,230,235,0.17)"/>
<rect x="1720" y="342" width="1" height="142" fill="rgba(230,230,235,0.17)"/>
<rect x="1812" y="342" width="1" height="142" fill="rgba(230,230,235,0.17)"/>
<text x="1326.5" y="352.3" font-size="12" fill="#ccccdc" text-anchor="end" letter-spacing="0.25">96 B/s</text>
<text x="1326.5" y="397.3" font-size="12" fill="#ccccdc" text-anchor="end" letter-spacing="0.25">64 B/s</text>
<text x="1326.5" y="442.3" font-size="12" fill="#ccccdc" text-anchor="end" letter-spacing="0.25">32 B/s</text>
<text x="1326.5" y="487.3" font-size="12" fill="#ccccdc" text-anchor="end" letter-spacing="0.25">0 B/s</text>
<text x="1352.5" y="501.8" font-size="12" fill="#ccccdc" text-anchor="middle" letter-spacing="0.25">07:30</text>
<text x="1444.5" y="501.8" font-size="12" fill="#ccccdc" text-anchor="middle" letter-spacing="0.25">08:00</text>
<text x="1536.5" y="501.8" font-size="12" fill="#ccccdc" text-anchor="middle" letter-spacing="0.25">08:30</text>
<text x="1628.5" y="501.8" font-size="12" fill="#ccccdc" text-anchor="middle" letter-spacing="0.25">09:00</text>
<text x="1720.5" y="501.8" font-size="12" fill="#ccccdc" text-anchor="middle" letter-spacing="0.25">09:30</text>
<text x="1812.5" y="501.8" font-size="12" fill="#ccccdc" text-anchor="middle" letter-spacing="0.25">10:00</text>
<rect x="1332" y="482.8" width="277.5" height="1.2" fill="#ff9830"/>
<rect x="66" y="572" width="623" height="1" fill="rgba(230,230,235,0.17)"/>
<rect x="66" y="591" width="623" height="1" fill="rgba(230,230,235,0.17)"/>
<rect x="66" y="610" width="623" height="1" fill="rgba(230,230,235,0.17)"/>
<rect x="66" y="630" width="623" height="1" fill="rgba(230,230,235,0.17)"/>
<rect x="66" y="649" width="623" height="1" fill="rgba(230,230,235,0.17)"/>
<rect x="88" y="572" width="1" height="78" fill="rgba(230,230,235,0.17)"/>
<rect x="192" y="572" width="1" height="78" fill="rgba(230,230,235,0.17)"/>
<rect x="296" y="572" width="1" height="78" fill="rgba(230,230,235,0.17)"/>
<rect x="399" y="572" width="1" height="78" fill="rgba(230,230,235,0.17)"/>
<rect x="503" y="572" width="1" height="78" fill="rgba(230,230,235,0.17)"/>
<rect x="607" y="572" width="1" height="78" fill="rgba(230,230,235,0.17)"/>
<text x="61.5" y="576.3" font-size="12" fill="#ccccdc" text-anchor="end" letter-spacing="0.25">1</text>
<text x="61.5" y="595.3" font-size="12" fill="#ccccdc" text-anchor="end" letter-spacing="0.25">0.500</text>
<text x="61.5" y="614.3" font-size="12" fill="#ccccdc" text-anchor="end" letter-spacing="0.25">0</text>
<text x="61.5" y="633.8" font-size="12" fill="#ccccdc" text-anchor="end" letter-spacing="0.25">-0.500</text>
<text x="61.5" y="653.3" font-size="12" fill="#ccccdc" text-anchor="end" letter-spacing="0.25">-1</text>
<text x="88" y="666.6" font-size="12" fill="#ccccdc" text-anchor="middle" letter-spacing="0.25">07:30</text>
<text x="192" y="666.6" font-size="12" fill="#ccccdc" text-anchor="middle" letter-spacing="0.25">08:00</text>
<text x="295.5" y="666.6" font-size="12" fill="#ccccdc" text-anchor="middle" letter-spacing="0.25">08:30</text>
<text x="399" y="666.6" font-size="12" fill="#ccccdc" text-anchor="middle" letter-spacing="0.25">09:00</text>
<text x="503" y="666.6" font-size="12" fill="#ccccdc" text-anchor="middle" letter-spacing="0.25">09:30</text>
<text x="607" y="666.6" font-size="12" fill="#ccccdc" text-anchor="middle" letter-spacing="0.25">10:00</text>
<rect x="66" y="609" width="313" height="2" fill="#c9583b"/>
<clipPath id="legclip"><rect x="14" y="676" width="680" height="55.6"/></clipPath>
<g clip-path="url(#legclip)">
<rect x="32" y="688.0" width="14" height="4" fill="#7eb26d" rx="2"/>
<text x="60" y="692.8" font-size="13" fill="#ccccdc" letter-spacing="-0.03">{api=&quot;getbucketlocation&quot;, server=&quot;127.0.0.1:9001&quot;}</text>
<rect x="365.3" y="688.0" width="14" height="4" fill="#eab839" rx="2"/>
<text x="393.3" y="692.8" font-size="13" fill="#ccccdc" letter-spacing="-0.03">{api=&quot;listbuckets&quot;, server=&quot;127.0.0.1:9001&quot;}</text>
<rect x="32" y="708.5" width="14" height="4" fill="#6ed0e0" rx="2"/>
<text x="60" y="713.3" font-size="13" fill="#ccccdc" letter-spacing="-0.03">{api=&quot;listobjectsv2&quot;, server=&quot;127.0.0.1:9001&quot;}</text>
<rect x="334" y="708.5" width="14" height="4" fill="#ef843c" rx="2"/>
<text x="362" y="713.3" font-size="13" fill="#ccccdc" letter-spacing="-0.03">{api=&quot;putbucket&quot;, server=&quot;127.0.0.1:9001&quot;}</text>
<rect x="32" y="729.7" width="14" height="4" fill="#e24d42" rx="2"/>
<text x="60" y="734.5" font-size="13" fill="#ccccdc" letter-spacing="-0.03">{api=&quot;putobject&quot;, server=&quot;127.0.0.1:9001&quot;}</text>
</g>
<rect x="699" y="681" width="8" height="43" rx="4" fill="#383a3f"/>
<rect x="777" y="572" width="465" height="1" fill="rgba(230,230,235,0.17)"/>
<rect x="777" y="604" width="465" height="1" fill="rgba(230,230,235,0.17)"/>
<rect x="777" y="637" width="465" height="1" fill="rgba(230,230,235,0.17)"/>
<rect x="777" y="669" width="465" height="1" fill="rgba(230,230,235,0.17)"/>
<rect x="777" y="702" width="465" height="1" fill="rgba(230,230,235,0.17)"/>
<rect x="794" y="572" width="1" height="131" fill="rgba(230,230,235,0.17)"/>
<rect x="871" y="572" width="1" height="131" fill="rgba(230,230,235,0.17)"/>
<rect x="948" y="572" width="1" height="131" fill="rgba(230,230,235,0.17)"/>
<rect x="1026" y="572" width="1" height="131" fill="rgba(230,230,235,0.17)"/>
<rect x="1104" y="572" width="1" height="131" fill="rgba(230,230,235,0.17)"/>
<rect x="1181" y="572" width="1" height="131" fill="rgba(230,230,235,0.17)"/>
<text x="771.7" y="576.3" font-size="12" fill="#ccccdc" text-anchor="end" letter-spacing="0.25">1</text>
<text x="771.7" y="608.5999999999999" font-size="12" fill="#ccccdc" text-anchor="end" letter-spacing="0.25">0.500</text>
<text x="771.7" y="641.3" font-size="12" fill="#ccccdc" text-anchor="end" letter-spacing="0.25">0</text>
<text x="771.7" y="673.5999999999999" font-size="12" fill="#ccccdc" text-anchor="end" letter-spacing="0.25">-0.500</text>
<text x="771.7" y="706.3" font-size="12" fill="#ccccdc" text-anchor="end" letter-spacing="0.25">-1</text>
<text x="793.5" y="720.8" font-size="12" fill="#ccccdc" text-anchor="middle" letter-spacing="0.25">07:30</text>
<text x="871" y="720.8" font-size="12" fill="#ccccdc" text-anchor="middle" letter-spacing="0.25">08:00</text>
<text x="948.5" y="720.8" font-size="12" fill="#ccccdc" text-anchor="middle" letter-spacing="0.25">08:30</text>
<text x="1026" y="720.8" font-size="12" fill="#ccccdc" text-anchor="middle" letter-spacing="0.25">09:00</text>
<text x="1103.5" y="720.8" font-size="12" fill="#ccccdc" text-anchor="middle" letter-spacing="0.25">09:30</text>
<text x="1181" y="720.8" font-size="12" fill="#ccccdc" text-anchor="middle" letter-spacing="0.25">10:00</text>
<text x="996" y="619.8" font-size="15" fill="#ccccdc" text-anchor="middle" letter-spacing="0.3">No data</text>
<rect x="1330" y="572" width="544" height="1" fill="rgba(230,230,235,0.17)"/>
<rect x="1330" y="604" width="544" height="1" fill="rgba(230,230,235,0.17)"/>
<rect x="1330" y="637" width="544" height="1" fill="rgba(230,230,235,0.17)"/>
<rect x="1330" y="669" width="544" height="1" fill="rgba(230,230,235,0.17)"/>
<rect x="1330" y="702" width="544" height="1" fill="rgba(230,230,235,0.17)"/>
<rect x="1350" y="572" width="1" height="131" fill="rgba(230,230,235,0.17)"/>
<rect x="1440" y="572" width="1" height="131" fill="rgba(230,230,235,0.17)"/>
<rect x="1530" y="572" width="1" height="131" fill="rgba(230,230,235,0.17)"/>
<rect x="1621" y="572" width="1" height="131" fill="rgba(230,230,235,0.17)"/>
<rect x="1712" y="572" width="1" height="131" fill="rgba(230,230,235,0.17)"/>
<rect x="1802" y="572" width="1" height="131" fill="rgba(230,230,235,0.17)"/>
<text x="1325" y="576.3" font-size="12" fill="#ccccdc" text-anchor="end" letter-spacing="0.25">1</text>
<text x="1325" y="608.5999999999999" font-size="12" fill="#ccccdc" text-anchor="end" letter-spacing="0.25">0.500</text>
<text x="1325" y="641.3" font-size="12" fill="#ccccdc" text-anchor="end" letter-spacing="0.25">0</text>
<text x="1325" y="673.5999999999999" font-size="12" fill="#ccccdc" text-anchor="end" letter-spacing="0.25">-0.500</text>
<text x="1325" y="706.3" font-size="12" fill="#ccccdc" text-anchor="end" letter-spacing="0.25">-1</text>
<text x="1349.5" y="720.8" font-size="12" fill="#ccccdc" text-anchor="middle" letter-spacing="0.25">07:30</text>
<text x="1440" y="720.8" font-size="12" fill="#ccccdc" text-anchor="middle" letter-spacing="0.25">08:00</text>
<text x="1530.5" y="720.8" font-size="12" fill="#ccccdc" text-anchor="middle" letter-spacing="0.25">08:30</text>
<text x="1621" y="720.8" font-size="12" fill="#ccccdc" text-anchor="middle" letter-spacing="0.25">09:00</text>
<text x="1712" y="720.8" font-size="12" fill="#ccccdc" text-anchor="middle" letter-spacing="0.25">09:30</text>
<text x="1802.5" y="720.8" font-size="12" fill="#ccccdc" text-anchor="middle" letter-spacing="0.25">10:00</text>
<text x="1589" y="620.2" font-size="15" fill="#ccccdc" text-anchor="middle" letter-spacing="0.3">No data</text>
<text x="197" y="802.2" font-size="13" fill="#ccccdc" text-anchor="end" letter-spacing="0">Pool 0 / Set 0 - Online Drives</text>
<rect x="207" y="790" width="10" height="16" rx="2" fill="url(#gGray)"/>
<rect x="219" y="790" width="10" height="16" rx="2" fill="url(#gGray)"/>
<rect x="231" y="790" width="10" height="16" rx="2" fill="url(#gGray)"/>
<rect x="243" y="790" width="10" height="16" rx="2" fill="url(#gGray)"/>
<rect x="255" y="790" width="10" height="16" rx="2" fill="url(#gGray)"/>
<rect x="267" y="790" width="10" height="16" rx="2" fill="url(#gGray)"/>
<rect x="279" y="790" width="10" height="16" rx="2" fill="url(#gGray)"/>
<rect x="291" y="790" width="10" height="16" rx="2" fill="url(#gGray)"/>
<rect x="303" y="790" width="10" height="16" rx="2" fill="url(#gGray)"/>
<rect x="315" y="790" width="10" height="16" rx="2" fill="url(#gGray)"/>
<rect x="327" y="790" width="10" height="16" rx="2" fill="url(#gGray)"/>
<rect x="339" y="790" width="10" height="16" rx="2" fill="url(#gGray)"/>
<rect x="351" y="790" width="10" height="16" rx="2" fill="url(#gGray)"/>
<rect x="363" y="790" width="10" height="16" rx="2" fill="url(#gGray)"/>
<rect x="375" y="790" width="10" height="16" rx="2" fill="url(#gGray)"/>
<rect x="387" y="790" width="10" height="16" rx="2" fill="url(#gGray)"/>
<rect x="399" y="790" width="10" height="16" rx="2" fill="url(#gGray)"/>
<rect x="411" y="790" width="10" height="16" rx="2" fill="url(#gGray)"/>
<rect x="423" y="790" width="10" height="16" rx="2" fill="url(#gGray)"/>
<rect x="435" y="790" width="10" height="16" rx="2" fill="url(#gGray)"/>
<rect x="447" y="790" width="10" height="16" rx="2" fill="url(#gGray)"/>
<rect x="459" y="790" width="10" height="16" rx="2" fill="url(#gGray)"/>
<rect x="471" y="790" width="10" height="16" rx="2" fill="url(#gGray)"/>
<rect x="483" y="790" width="10" height="16" rx="2" fill="url(#gGray)"/>
<rect x="495" y="790" width="10" height="16" rx="2" fill="url(#gGray)"/>
<rect x="507" y="790" width="10" height="16" rx="2" fill="url(#gGray)"/>
<rect x="519" y="790" width="10" height="16" rx="2" fill="url(#gGray)"/>
<rect x="531" y="790" width="10" height="16" rx="2" fill="url(#gGray)"/>
<rect x="543" y="790" width="10" height="16" rx="2" fill="url(#gGray)"/>
<rect x="555" y="790" width="10" height="16" rx="2" fill="url(#gGray)"/>
<rect x="567" y="790" width="10" height="16" rx="2" fill="url(#gGray)"/>
<rect x="579" y="790" width="10" height="16" rx="2" fill="url(#gGray)"/>
<rect x="591" y="790" width="10" height="16" rx="2" fill="url(#gGray)"/>
<rect x="603" y="790" width="10" height="16" rx="2" fill="url(#gGray)"/>
<rect x="615" y="790" width="10" height="16" rx="2" fill="url(#gGray)"/>
<rect x="627" y="790" width="10" height="16" rx="2" fill="url(#gGray)"/>
<rect x="639" y="790" width="10" height="16" rx="2" fill="url(#gGray)"/>
<rect x="651" y="790" width="10" height="16" rx="2" fill="url(#gGray)"/>
<rect x="663" y="790" width="10" height="16" rx="2" fill="url(#gGray)"/>
<rect x="675" y="790" width="10" height="16" rx="2" fill="url(#gGray)"/>
<rect x="687" y="790" width="10" height="16" rx="2" fill="url(#gGray)"/>
<rect x="699" y="790" width="10" height="16" rx="2" fill="url(#gGray)"/>
<rect x="711" y="790" width="10" height="16" rx="2" fill="url(#gGray)"/>
<rect x="723" y="790" width="10" height="16" rx="2" fill="url(#gGray)"/>
<rect x="735" y="790" width="10" height="16" rx="2" fill="url(#gGray)"/>
<rect x="747" y="790" width="10" height="16" rx="2" fill="url(#gGray)"/>
<rect x="759" y="790" width="10" height="16" rx="2" fill="url(#gGray)"/>
<rect x="771" y="790" width="10" height="16" rx="2" fill="url(#gGray)"/>
<text x="923" y="804" font-size="16" fill="#8e8e95" text-anchor="end">4</text>
<text x="197" y="820.2" font-size="13" fill="#ccccdc" text-anchor="end" letter-spacing="0">Pool 1 / Set 0 - Online Drives</text>
<rect x="207" y="808" width="10" height="16" rx="2" fill="url(#gGray)"/>
<rect x="219" y="808" width="10" height="16" rx="2" fill="url(#gGray)"/>
<rect x="231" y="808" width="10" height="16" rx="2" fill="url(#gGray)"/>
<rect x="243" y="808" width="10" height="16" rx="2" fill="url(#gGray)"/>
<rect x="255" y="808" width="10" height="16" rx="2" fill="url(#gGray)"/>
<rect x="267" y="808" width="10" height="16" rx="2" fill="url(#gGray)"/>
<rect x="279" y="808" width="10" height="16" rx="2" fill="url(#gGray)"/>
<rect x="291" y="808" width="10" height="16" rx="2" fill="url(#gGray)"/>
<rect x="303" y="808" width="10" height="16" rx="2" fill="url(#gGray)"/>
<rect x="315" y="808" width="10" height="16" rx="2" fill="url(#gGray)"/>
<rect x="327" y="808" width="10" height="16" rx="2" fill="url(#gGray)"/>
<rect x="339" y="808" width="10" height="16" rx="2" fill="url(#gGray)"/>
<rect x="351" y="808" width="10" height="16" rx="2" fill="url(#gGray)"/>
<rect x="363" y="808" width="10" height="16" rx="2" fill="url(#gGray)"/>
<rect x="375" y="808" width="10" height="16" rx="2" fill="url(#gGray)"/>
<rect x="387" y="808" width="10" height="16" rx="2" fill="url(#gGray)"/>
<rect x="399" y="808" width="10" height="16" rx="2" fill="url(#gGray)"/>
<rect x="411" y="808" width="10" height="16" rx="2" fill="url(#gGray)"/>
<rect x="423" y="808" width="10" height="16" rx="2" fill="url(#gGray)"/>
<rect x="435" y="808" width="10" height="16" rx="2" fill="url(#gGray)"/>
<rect x="447" y="808" width="10" height="16" rx="2" fill="url(#gGray)"/>
<rect x="459" y="808" width="10" height="16" rx="2" fill="url(#gGray)"/>
<rect x="471" y="808" width="10" height="16" rx="2" fill="url(#gGray)"/>
<rect x="483" y="808" width="10" height="16" rx="2" fill="url(#gGray)"/>
<rect x="495" y="808" width="10" height="16" rx="2" fill="url(#gGray)"/>
<rect x="507" y="808" width="10" height="16" rx="2" fill="url(#gGray)"/>
<rect x="519" y="808" width="10" height="16" rx="2" fill="url(#gGray)"/>
<rect x="531" y="808" width="10" height="16" rx="2" fill="url(#gGray)"/>
<rect x="543" y="808" width="10" height="16" rx="2" fill="url(#gGray)"/>
<rect x="555" y="808" width="10" height="16" rx="2" fill="url(#gGray)"/>
<rect x="567" y="808" width="10" height="16" rx="2" fill="url(#gGray)"/>
<rect x="579" y="808" width="10" height="16" rx="2" fill="url(#gGray)"/>
<rect x="591" y="808" width="10" height="16" rx="2" fill="url(#gGray)"/>
<rect x="603" y="808" width="10" height="16" rx="2" fill="url(#gGray)"/>
<rect x="615" y="808" width="10" height="16" rx="2" fill="url(#gGray)"/>
<rect x="627" y="808" width="10" height="16" rx="2" fill="url(#gGray)"/>
<rect x="639" y="808" width="10" height="16" rx="2" fill="url(#gGray)"/>
<rect x="651" y="808" width="10" height="16" rx="2" fill="url(#gGray)"/>
<rect x="663" y="808" width="10" height="16" rx="2" fill="url(#gGray)"/>
<rect x="675" y="808" width="10" height="16" rx="2" fill="url(#gGray)"/>
<rect x="687" y="808" width="10" height="16" rx="2" fill="url(#gGray)"/>
<rect x="699" y="808" width="10" height="16" rx="2" fill="url(#gGray)"/>
<rect x="711" y="808" width="10" height="16" rx="2" fill="url(#gGray)"/>
<rect x="723" y="808" width="10" height="16" rx="2" fill="url(#gGray)"/>
<rect x="735" y="808" width="10" height="16" rx="2" fill="url(#gGray)"/>
<rect x="747" y="808" width="10" height="16" rx="2" fill="url(#gGray)"/>
<rect x="759" y="808" width="10" height="16" rx="2" fill="url(#gGray)"/>
<rect x="771" y="808" width="10" height="16" rx="2" fill="url(#gGray)"/>
<text x="923" y="822" font-size="16" fill="#8e8e95" text-anchor="end">4</text>
<text x="197" y="838.2" font-size="13" fill="#ccccdc" text-anchor="end" letter-spacing="0">Pool 2 / Set 0 - Online Drives</text>
<rect x="207" y="826" width="10" height="16" rx="2" fill="url(#gGray)"/>
<rect x="219" y="826" width="10" height="16" rx="2" fill="url(#gGray)"/>
<rect x="231" y="826" width="10" height="16" rx="2" fill="url(#gGray)"/>
<rect x="243" y="826" width="10" height="16" rx="2" fill="url(#gGray)"/>
<rect x="255" y="826" width="10" height="16" rx="2" fill="url(#gGray)"/>
<rect x="267" y="826" width="10" height="16" rx="2" fill="url(#gGray)"/>
<rect x="279" y="826" width="10" height="16" rx="2" fill="url(#gGray)"/>
<rect x="291" y="826" width="10" height="16" rx="2" fill="url(#gGray)"/>
<rect x="303" y="826" width="10" height="16" rx="2" fill="url(#gGray)"/>
<rect x="315" y="826" width="10" height="16" rx="2" fill="url(#gGray)"/>
<rect x="327" y="826" width="10" height="16" rx="2" fill="url(#gGray)"/>
<rect x="339" y="826" width="10" height="16" rx="2" fill="url(#gGray)"/>
<rect x="351" y="826" width="10" height="16" rx="2" fill="url(#gGray)"/>
<rect x="363" y="826" width="10" height="16" rx="2" fill="url(#gGray)"/>
<rect x="375" y="826" width="10" height="16" rx="2" fill="url(#gGray)"/>
<rect x="387" y="826" width="10" height="16" rx="2" fill="url(#gGray)"/>
<rect x="399" y="826" width="10" height="16" rx="2" fill="url(#gGray)"/>
<rect x="411" y="826" width="10" height="16" rx="2" fill="url(#gGray)"/>
<rect x="423" y="826" width="10" height="16" rx="2" fill="url(#gGray)"/>
<rect x="435" y="826" width="10" height="16" rx="2" fill="url(#gGray)"/>
<rect x="447" y="826" width="10" height="16" rx="2" fill="url(#gGray)"/>
<rect x="459" y="826" width="10" height="16" rx="2" fill="url(#gGray)"/>
<rect x="471" y="826" width="10" height="16" rx="2" fill="url(#gGray)"/>
<rect x="483" y="826" width="10" height="16" rx="2" fill="url(#gGray)"/>
<rect x="495" y="826" width="10" height="16" rx="2" fill="url(#gGray)"/>
<rect x="507" y="826" width="10" height="16" rx="2" fill="url(#gGray)"/>
<rect x="519" y="826" width="10" height="16" rx="2" fill="url(#gGray)"/>
<rect x="531" y="826" width="10" height="16" rx="2" fill="url(#gGray)"/>
<rect x="543" y="826" width="10" height="16" rx="2" fill="url(#gGray)"/>
<rect x="555" y="826" width="10" height="16" rx="2" fill="url(#gGray)"/>
<rect x="567" y="826" width="10" height="16" rx="2" fill="url(#gGray)"/>
<rect x="579" y="826" width="10" height="16" rx="2" fill="url(#gGray)"/>
<rect x="591" y="826" width="10" height="16" rx="2" fill="url(#gGray)"/>
<rect x="603" y="826" width="10" height="16" rx="2" fill="url(#gGray)"/>
<rect x="615" y="826" width="10" height="16" rx="2" fill="url(#gGray)"/>
<rect x="627" y="826" width="10" height="16" rx="2" fill="url(#gGray)"/>
<rect x="639" y="826" width="10" height="16" rx="2" fill="url(#gGray)"/>
<rect x="651" y="826" width="10" height="16" rx="2" fill="url(#gGray)"/>
<rect x="663" y="826" width="10" height="16" rx="2" fill="url(#gGray)"/>
<rect x="675" y="826" width="10" height="16" rx="2" fill="url(#gGray)"/>
<rect x="687" y="826" width="10" height="16" rx="2" fill="url(#gGray)"/>
<rect x="699" y="826" width="10" height="16" rx="2" fill="url(#gGray)"/>
<rect x="711" y="826" width="10" height="16" rx="2" fill="url(#gGray)"/>
<rect x="723" y="826" width="10" height="16" rx="2" fill="url(#gGray)"/>
<rect x="735" y="826" width="10" height="16" rx="2" fill="url(#gGray)"/>
<rect x="747" y="826" width="10" height="16" rx="2" fill="url(#gGray)"/>
<rect x="759" y="826" width="10" height="16" rx="2" fill="url(#gGray)"/>
<rect x="771" y="826" width="10" height="16" rx="2" fill="url(#gGray)"/>
<text x="923" y="840" font-size="16" fill="#8e8e95" text-anchor="end">4</text>
<text x="197" y="856.2" font-size="13" fill="#ccccdc" text-anchor="end" letter-spacing="0">Pool 3 / Set 0 - Online Drives</text>
<rect x="207" y="844" width="10" height="16" rx="2" fill="url(#gGray)"/>
<rect x="219" y="844" width="10" height="16" rx="2" fill="url(#gGray)"/>
<rect x="231" y="844" width="10" height="16" rx="2" fill="url(#gGray)"/>
<rect x="243" y="844" width="10" height="16" rx="2" fill="url(#gGray)"/>
<rect x="255" y="844" width="10" height="16" rx="2" fill="url(#gGray)"/>
<rect x="267" y="844" width="10" height="16" rx="2" fill="url(#gGray)"/>
<rect x="279" y="844" width="10" height="16" rx="2" fill="url(#gGray)"/>
<rect x="291" y="844" width="10" height="16" rx="2" fill="url(#gGray)"/>
<rect x="303" y="844" width="10" height="16" rx="2" fill="url(#gGray)"/>
<rect x="315" y="844" width="10" height="16" rx="2" fill="url(#gGray)"/>
<rect x="327" y="844" width="10" height="16" rx="2" fill="url(#gGray)"/>
<rect x="339" y="844" width="10" height="16" rx="2" fill="url(#gGray)"/>
<rect x="351" y="844" width="10" height="16" rx="2" fill="url(#gGray)"/>
<rect x="363" y="844" width="10" height="16" rx="2" fill="url(#gGray)"/>
<rect x="375" y="844" width="10" height="16" rx="2" fill="url(#gGray)"/>
<rect x="387" y="844" width="10" height="16" rx="2" fill="url(#gGray)"/>
<rect x="399" y="844" width="10" height="16" rx="2" fill="url(#gGray)"/>
<rect x="411" y="844" width="10" height="16" rx="2" fill="url(#gGray)"/>
<rect x="423" y="844" width="10" height="16" rx="2" fill="url(#gGray)"/>
<rect x="435" y="844" width="10" height="16" rx="2" fill="url(#gGray)"/>
<rect x="447" y="844" width="10" height="16" rx="2" fill="url(#gGray)"/>
<rect x="459" y="844" width="10" height="16" rx="2" fill="url(#gGray)"/>
<rect x="471" y="844" width="10" height="16" rx="2" fill="url(#gGray)"/>
<rect x="483" y="844" width="10" height="16" rx="2" fill="url(#gGray)"/>
<rect x="495" y="844" width="10" height="16" rx="2" fill="url(#gGray)"/>
<rect x="507" y="844" width="10" height="16" rx="2" fill="url(#gGray)"/>
<rect x="519" y="844" width="10" height="16" rx="2" fill="url(#gGray)"/>
<rect x="531" y="844" width="10" height="16" rx="2" fill="url(#gGray)"/>
<rect x="543" y="844" width="10" height="16" rx="2" fill="url(#gGray)"/>
<rect x="555" y="844" width="10" height="16" rx="2" fill="url(#gGray)"/>
<rect x="567" y="844" width="10" height="16" rx="2" fill="url(#gGray)"/>
<rect x="579" y="844" width="10" height="16" rx="2" fill="url(#gGray)"/>
<rect x="591" y="844" width="10" height="16" rx="2" fill="url(#gGray)"/>
<rect x="603" y="844" width="10" height="16" rx="2" fill="url(#gGray)"/>
<rect x="615" y="844" width="10" height="16" rx="2" fill="url(#gGray)"/>
<rect x="627" y="844" width="10" height="16" rx="2" fill="url(#gGray)"/>
<rect x="639" y="844" width="10" height="16" rx="2" fill="url(#gGray)"/>
<rect x="651" y="844" width="10" height="16" rx="2" fill="url(#gGray)"/>
<rect x="663" y="844" width="10" height="16" rx="2" fill="url(#gGray)"/>
<rect x="675" y="844" width="10" height="16" rx="2" fill="url(#gGray)"/>
<rect x="687" y="844" width="10" height="16" rx="2" fill="url(#gGray)"/>
<rect x="699" y="844" width="10" height="16" rx="2" fill="url(#gGray)"/>
<rect x="711" y="844" width="10" height="16" rx="2" fill="url(#gGray)"/>
<rect x="723" y="844" width="10" height="16" rx="2" fill="url(#gGray)"/>
<rect x="735" y="844" width="10" height="16" rx="2" fill="url(#gGray)"/>
<rect x="747" y="844" width="10" height="16" rx="2" fill="url(#gGray)"/>
<rect x="759" y="844" width="10" height="16" rx="2" fill="url(#gGray)"/>
<rect x="771" y="844" width="10" height="16" rx="2" fill="url(#gGray)"/>
<text x="923" y="858" font-size="16" fill="#8e8e95" text-anchor="end">4</text>
<text x="197" y="874.2" font-size="13" fill="#ccccdc" text-anchor="end" letter-spacing="0">Pool 0 / Set 0 - Read Quorum</text>
<rect x="207" y="862" width="10" height="16" rx="2" fill="url(#gGray)"/>
<rect x="219" y="862" width="10" height="16" rx="2" fill="url(#gGray)"/>
<rect x="231" y="862" width="10" height="16" rx="2" fill="url(#gGray)"/>
<rect x="243" y="862" width="10" height="16" rx="2" fill="url(#gGray)"/>
<rect x="255" y="862" width="10" height="16" rx="2" fill="url(#gGray)"/>
<rect x="267" y="862" width="10" height="16" rx="2" fill="url(#gGray)"/>
<rect x="279" y="862" width="10" height="16" rx="2" fill="url(#gGray)"/>
<rect x="291" y="862" width="10" height="16" rx="2" fill="url(#gGray)"/>
<rect x="303" y="862" width="10" height="16" rx="2" fill="url(#gGray)"/>
<rect x="315" y="862" width="10" height="16" rx="2" fill="url(#gGray)"/>
<rect x="327" y="862" width="10" height="16" rx="2" fill="url(#gGray)"/>
<rect x="339" y="862" width="10" height="16" rx="2" fill="url(#gGray)"/>
<rect x="351" y="862" width="10" height="16" rx="2" fill="url(#gGray)"/>
<rect x="363" y="862" width="10" height="16" rx="2" fill="url(#gGray)"/>
<rect x="375" y="862" width="10" height="16" rx="2" fill="url(#gGray)"/>
<rect x="387" y="862" width="10" height="16" rx="2" fill="url(#gGray)"/>
<rect x="399" y="862" width="10" height="16" rx="2" fill="url(#gGray)"/>
<rect x="411" y="862" width="10" height="16" rx="2" fill="url(#gGray)"/>
<rect x="423" y="862" width="10" height="16" rx="2" fill="url(#gGray)"/>
<rect x="435" y="862" width="10" height="16" rx="2" fill="url(#gGray)"/>
<rect x="447" y="862" width="10" height="16" rx="2" fill="url(#gGray)"/>
<rect x="459" y="862" width="10" height="16" rx="2" fill="url(#gGray)"/>
<rect x="471" y="862" width="10" height="16" rx="2" fill="url(#gGray)"/>
<rect x="483" y="862" width="10" height="16" rx="2" fill="url(#gGray)"/>
<rect x="495" y="862" width="10" height="16" rx="2" fill="url(#gGray)"/>
<rect x="507" y="862" width="10" height="16" fill="#2a2c30" rx="2"/>
<rect x="519" y="862" width="10" height="16" fill="#2a2c30" rx="2"/>
<rect x="531" y="862" width="10" height="16" fill="#2a2c30" rx="2"/>
<rect x="543" y="862" width="10" height="16" fill="#2a2c30" rx="2"/>
<rect x="555" y="862" width="10" height="16" fill="#2a2c30" rx="2"/>
<rect x="567" y="862" width="10" height="16" fill="#2a2c30" rx="2"/>
<rect x="579" y="862" width="10" height="16" fill="#2a2c30" rx="2"/>
<rect x="591" y="862" width="10" height="16" fill="#2a2c30" rx="2"/>
<rect x="603" y="862" width="10" height="16" fill="#2a2c30" rx="2"/>
<rect x="615" y="862" width="10" height="16" fill="#2a2c30" rx="2"/>
<rect x="627" y="862" width="10" height="16" fill="#2a2c30" rx="2"/>
<rect x="639" y="862" width="10" height="16" fill="#2a2c30" rx="2"/>
<rect x="651" y="862" width="10" height="16" fill="#2a2c30" rx="2"/>
<rect x="663" y="862" width="10" height="16" fill="#2a2c30" rx="2"/>
<rect x="675" y="862" width="10" height="16" fill="#2a2c30" rx="2"/>
<rect x="687" y="862" width="10" height="16" fill="#2a2c30" rx="2"/>
<rect x="699" y="862" width="10" height="16" fill="#2a2c30" rx="2"/>
<rect x="711" y="862" width="10" height="16" fill="#2a2c30" rx="2"/>
<rect x="723" y="862" width="10" height="16" fill="#2a2c30" rx="2"/>
<rect x="735" y="862" width="10" height="16" fill="#2a2c30" rx="2"/>
<rect x="747" y="862" width="10" height="16" fill="#2a2c30" rx="2"/>
<rect x="759" y="862" width="10" height="16" fill="#2a2c30" rx="2"/>
<rect x="771" y="862" width="10" height="16" fill="#2a2c30" rx="2"/>
<text x="923" y="876" font-size="16" fill="#8e8e95" text-anchor="end">2</text>
<text x="197" y="892.2" font-size="13" fill="#ccccdc" text-anchor="end" letter-spacing="0">Pool 1 / Set 0 - Read Quorum</text>
<rect x="207" y="880" width="10" height="16" rx="2" fill="url(#gGray)"/>
<rect x="219" y="880" width="10" height="16" rx="2" fill="url(#gGray)"/>
<rect x="231" y="880" width="10" height="16" rx="2" fill="url(#gGray)"/>
<rect x="243" y="880" width="10" height="16" rx="2" fill="url(#gGray)"/>
<rect x="255" y="880" width="10" height="16" rx="2" fill="url(#gGray)"/>
<rect x="267" y="880" width="10" height="16" rx="2" fill="url(#gGray)"/>
<rect x="279" y="880" width="10" height="16" rx="2" fill="url(#gGray)"/>
<rect x="291" y="880" width="10" height="16" rx="2" fill="url(#gGray)"/>
<rect x="303" y="880" width="10" height="16" rx="2" fill="url(#gGray)"/>
<rect x="315" y="880" width="10" height="16" rx="2" fill="url(#gGray)"/>
<rect x="327" y="880" width="10" height="16" rx="2" fill="url(#gGray)"/>
<rect x="339" y="880" width="10" height="16" rx="2" fill="url(#gGray)"/>
<rect x="351" y="880" width="10" height="16" rx="2" fill="url(#gGray)"/>
<rect x="363" y="880" width="10" height="16" rx="2" fill="url(#gGray)"/>
<rect x="375" y="880" width="10" height="16" rx="2" fill="url(#gGray)"/>
<rect x="387" y="880" width="10" height="16" rx="2" fill="url(#gGray)"/>
<rect x="399" y="880" width="10" height="16" rx="2" fill="url(#gGray)"/>
<rect x="411" y="880" width="10" height="16" rx="2" fill="url(#gGray)"/>
<rect x="423" y="880" width="10" height="16" rx="2" fill="url(#gGray)"/>
<rect x="435" y="880" width="10" height="16" rx="2" fill="url(#gGray)"/>
<rect x="447" y="880" width="10" height="16" rx="2" fill="url(#gGray)"/>
<rect x="459" y="880" width="10" height="16" rx="2" fill="url(#gGray)"/>
<rect x="471" y="880" width="10" height="16" rx="2" fill="url(#gGray)"/>
<rect x="483" y="880" width="10" height="16" rx="2" fill="url(#gGray)"/>
<rect x="495" y="880" width="10" height="16" rx="2" fill="url(#gGray)"/>
<rect x="507" y="880" width="10" height="16" fill="#2a2c30" rx="2"/>
<rect x="519" y="880" width="10" height="16" fill="#2a2c30" rx="2"/>
<rect x="531" y="880" width="10" height="16" fill="#2a2c30" rx="2"/>
<rect x="543" y="880" width="10" height="16" fill="#2a2c30" rx="2"/>
<rect x="555" y="880" width="10" height="16" fill="#2a2c30" rx="2"/>
<rect x="567" y="880" width="10" height="16" fill="#2a2c30" rx="2"/>
<rect x="579" y="880" width="10" height="16" fill="#2a2c30" rx="2"/>
<rect x="591" y="880" width="10" height="16" fill="#2a2c30" rx="2"/>
<rect x="603" y="880" width="10" height="16" fill="#2a2c30" rx="2"/>
<rect x="615" y="880" width="10" height="16" fill="#2a2c30" rx="2"/>
<rect x="627" y="880" width="10" height="16" fill="#2a2c30" rx="2"/>
<rect x="639" y="880" width="10" height="16" fill="#2a2c30" rx="2"/>
<rect x="651" y="880" width="10" height="16" fill="#2a2c30" rx="2"/>
<rect x="663" y="880" width="10" height="16" fill="#2a2c30" rx="2"/>
<rect x="675" y="880" width="10" height="16" fill="#2a2c30" rx="2"/>
<rect x="687" y="880" width="10" height="16" fill="#2a2c30" rx="2"/>
<rect x="699" y="880" width="10" height="16" fill="#2a2c30" rx="2"/>
<rect x="711" y="880" width="10" height="16" fill="#2a2c30" rx="2"/>
<rect x="723" y="880" width="10" height="16" fill="#2a2c30" rx="2"/>
<rect x="735" y="880" width="10" height="16" fill="#2a2c30" rx="2"/>
<rect x="747" y="880" width="10" height="16" fill="#2a2c30" rx="2"/>
<rect x="759" y="880" width="10" height="16" fill="#2a2c30" rx="2"/>
<rect x="771" y="880" width="10" height="16" fill="#2a2c30" rx="2"/>
<text x="923" y="894" font-size="16" fill="#8e8e95" text-anchor="end">2</text>
<rect x="936.5" y="790.5" width="7" height="110" rx="1" fill="#45474f" stroke="#0f1014"/>
<rect x="1876" y="749" width="24.5" height="32.5" rx="2" fill="#25272d"/>
<circle cx="1888" cy="760.8" r="1.1" fill="#a0a0ab"/>
<circle cx="1888" cy="766.2" r="1.1" fill="#a0a0ab"/>
<circle cx="1888" cy="771.4" r="1.1" fill="#a0a0ab"/>
<text x="971" y="810" font-size="18" fill="#ccccdc" textLength="116" lengthAdjust="spacing">127.0.0.1:9001</text>
<rect x="970" y="817" width="10" height="33" fill="#5aa55a" rx="2"/>
<rect x="970" y="817" width="10" height="33" rx="2" fill="url(#cellShade)"/>
<rect x="982" y="817" width="10" height="33" fill="#5da559" rx="2"/>
<rect x="982" y="817" width="10" height="33" rx="2" fill="url(#cellShade)"/>
<rect x="994" y="817" width="10" height="33" fill="#61a658" rx="2"/>
<rect x="994" y="817" width="10" height="33" rx="2" fill="url(#cellShade)"/>
<rect x="1006" y="817" width="10" height="33" fill="#64a657" rx="2"/>
<rect x="1006" y="817" width="10" height="33" rx="2" fill="url(#cellShade)"/>
<rect x="1018" y="817" width="10" height="33" fill="#68a756" rx="2"/>
<rect x="1018" y="817" width="10" height="33" rx="2" fill="url(#cellShade)"/>
<rect x="1030" y="817" width="10" height="33" fill="#6ba755" rx="2"/>
<rect x="1030" y="817" width="10" height="33" rx="2" fill="url(#cellShade)"/>
<rect x="1042" y="817" width="10" height="33" fill="#6fa854" rx="2"/>
<rect x="1042" y="817" width="10" height="33" rx="2" fill="url(#cellShade)"/>
<rect x="1054" y="817" width="10" height="33" fill="#72a853" rx="2"/>
<rect x="1054" y="817" width="10" height="33" rx="2" fill="url(#cellShade)"/>
<rect x="1066" y="817" width="10" height="33" fill="#76a952" rx="2"/>
<rect x="1066" y="817" width="10" height="33" rx="2" fill="url(#cellShade)"/>
<rect x="1078" y="817" width="10" height="33" fill="#79a951" rx="2"/>
<rect x="1078" y="817" width="10" height="33" rx="2" fill="url(#cellShade)"/>
<rect x="1090" y="817" width="10" height="33" fill="#7daa50" rx="2"/>
<rect x="1090" y="817" width="10" height="33" rx="2" fill="url(#cellShade)"/>
<rect x="1102" y="817" width="10" height="33" fill="#80aa50" rx="2"/>
<rect x="1102" y="817" width="10" height="33" rx="2" fill="url(#cellShade)"/>
<rect x="1114" y="817" width="10" height="33" fill="#84ab4f" rx="2"/>
<rect x="1114" y="817" width="10" height="33" rx="2" fill="url(#cellShade)"/>
<rect x="1126" y="817" width="10" height="33" fill="#2e3828" rx="2"/>
<rect x="1138" y="817" width="10" height="33" fill="#2f3828" rx="2"/>
<rect x="1150" y="817" width="10" height="33" fill="#303828" rx="2"/>
<rect x="1162" y="817" width="10" height="33" fill="#303828" rx="2"/>
<rect x="1174" y="817" width="10" height="33" fill="#313828" rx="2"/>
<rect x="1186" y="817" width="10" height="33" fill="#323827" rx="2"/>
<rect x="1198" y="817" width="10" height="33" fill="#323827" rx="2"/>
<rect x="1210" y="817" width="10" height="33" fill="#333927" rx="2"/>
<rect x="1222" y="817" width="10" height="33" fill="#343927" rx="2"/>
<rect x="1234" y="817" width="10" height="33" fill="#353927" rx="2"/>
<rect x="1246" y="817" width="10" height="33" fill="#353926" rx="2"/>
<rect x="1258" y="817" width="10" height="33" fill="#363926" rx="2"/>
<rect x="1270" y="817" width="10" height="33" fill="#373926" rx="2"/>
<rect x="1282" y="817" width="10" height="33" fill="#373926" rx="2"/>
<rect x="1294" y="817" width="10" height="33" fill="#383926" rx="2"/>
<rect x="1306" y="817" width="10" height="33" fill="#393925" rx="2"/>
<rect x="1318" y="817" width="10" height="33" fill="#393925" rx="2"/>
<rect x="1330" y="817" width="10" height="33" fill="#3a3925" rx="2"/>
<rect x="1342" y="817" width="10" height="33" fill="#3b3a25" rx="2"/>
<rect x="1354" y="817" width="10" height="33" fill="#3b3925" rx="2"/>
<rect x="1366" y="817" width="10" height="33" fill="#3b3925" rx="2"/>
<rect x="1378" y="817" width="10" height="33" fill="#3c3825" rx="2"/>
<rect x="1390" y="817" width="10" height="33" fill="#3c3725" rx="2"/>
<rect x="1402" y="817" width="10" height="33" fill="#3c3725" rx="2"/>
<rect x="1414" y="817" width="10" height="33" fill="#3c3625" rx="2"/>
<rect x="1426" y="817" width="10" height="33" fill="#3c3525" rx="2"/>
<rect x="1438" y="817" width="10" height="33" fill="#3c3525" rx="2"/>
<rect x="1450" y="817" width="10" height="33" fill="#3c3425" rx="2"/>
<rect x="1462" y="817" width="10" height="33" fill="#3c3425" rx="2"/>
<rect x="1474" y="817" width="10" height="33" fill="#3d3326" rx="2"/>
<rect x="1486" y="817" width="10" height="33" fill="#3d3226" rx="2"/>
<rect x="1498" y="817" width="10" height="33" fill="#3d3226" rx="2"/>
<rect x="1510" y="817" width="10" height="33" fill="#3d3126" rx="2"/>
<rect x="1522" y="817" width="10" height="33" fill="#3d3026" rx="2"/>
<rect x="1534" y="817" width="10" height="33" fill="#3d3026" rx="2"/>
<rect x="1546" y="817" width="10" height="33" fill="#3d2f26" rx="2"/>
<rect x="1558" y="817" width="10" height="33" fill="#3d2e26" rx="2"/>
<rect x="1570" y="817" width="10" height="33" fill="#3e2e26" rx="2"/>
<rect x="1582" y="817" width="10" height="33" fill="#3e2d26" rx="2"/>
<rect x="1594" y="817" width="10" height="33" fill="#3e2d26" rx="2"/>
<rect x="1606" y="817" width="10" height="33" fill="#3e2c26" rx="2"/>
<rect x="1618" y="817" width="10" height="33" fill="#3e2b26" rx="2"/>
<rect x="1630" y="817" width="10" height="33" fill="#3e2b26" rx="2"/>
<rect x="1642" y="817" width="10" height="33" fill="#3e2a27" rx="2"/>
<rect x="1654" y="817" width="10" height="33" fill="#3e2927" rx="2"/>
<rect x="1666" y="817" width="10" height="33" fill="#3f2927" rx="2"/>
<rect x="1678" y="817" width="10" height="33" fill="#3f2827" rx="2"/>
<rect x="1690" y="817" width="10" height="33" fill="#3f2827" rx="2"/>
<rect x="1702" y="817" width="10" height="33" fill="#3f2727" rx="2"/>
<rect x="1714" y="817" width="10" height="33" fill="#3f2627" rx="2"/>
<rect x="1726" y="817" width="10" height="33" fill="#3f2627" rx="2"/>
<text x="1828.5" y="845" font-size="33" fill="#9cc25a" stroke="#9cc25a" stroke-width="0.35" text-anchor="middle" letter-spacing="0">167<tspan font-size="19" dx="6" stroke-width="0.2">MiB</tspan></text>
<text x="971" y="871.8" font-size="18" fill="#ccccdc" textLength="120" lengthAdjust="spacing">127.0.0.1:9002</text>
<rect x="970" y="879" width="10" height="33" fill="#5aa55a" rx="2"/>
<rect x="970" y="879" width="10" height="33" rx="2" fill="url(#cellShade)"/>
<rect x="982" y="879" width="10" height="33" fill="#5da559" rx="2"/>
<rect x="982" y="879" width="10" height="33" rx="2" fill="url(#cellShade)"/>
<rect x="994" y="879" width="10" height="33" fill="#61a658" rx="2"/>
<rect x="994" y="879" width="10" height="33" rx="2" fill="url(#cellShade)"/>
<rect x="1006" y="879" width="10" height="33" fill="#64a657" rx="2"/>
<rect x="1006" y="879" width="10" height="33" rx="2" fill="url(#cellShade)"/>
<rect x="1018" y="879" width="10" height="33" fill="#68a756" rx="2"/>
<rect x="1018" y="879" width="10" height="33" rx="2" fill="url(#cellShade)"/>
<rect x="1030" y="879" width="10" height="33" fill="#6ba755" rx="2"/>
<rect x="1030" y="879" width="10" height="33" rx="2" fill="url(#cellShade)"/>
<rect x="1042" y="879" width="10" height="33" fill="#6fa854" rx="2"/>
<rect x="1042" y="879" width="10" height="33" rx="2" fill="url(#cellShade)"/>
<rect x="1054" y="879" width="10" height="33" fill="#72a853" rx="2"/>
<rect x="1054" y="879" width="10" height="33" rx="2" fill="url(#cellShade)"/>
<rect x="1066" y="879" width="10" height="33" fill="#76a952" rx="2"/>
<rect x="1066" y="879" width="10" height="33" rx="2" fill="url(#cellShade)"/>
<rect x="1078" y="879" width="10" height="33" fill="#79a951" rx="2"/>
<rect x="1078" y="879" width="10" height="33" rx="2" fill="url(#cellShade)"/>
<rect x="1090" y="879" width="10" height="33" fill="#7daa50" rx="2"/>
<rect x="1090" y="879" width="10" height="33" rx="2" fill="url(#cellShade)"/>
<rect x="1102" y="879" width="10" height="33" fill="#80aa50" rx="2"/>
<rect x="1102" y="879" width="10" height="33" rx="2" fill="url(#cellShade)"/>
<rect x="1114" y="879" width="10" height="33" fill="#2e3829" rx="2"/>
<rect x="1126" y="879" width="10" height="33" fill="#2e3828" rx="2"/>
<rect x="1138" y="879" width="10" height="33" fill="#2f3828" rx="2"/>
<rect x="1150" y="879" width="10" height="33" fill="#303828" rx="2"/>
<rect x="1162" y="879" width="10" height="33" fill="#303828" rx="2"/>
<rect x="1174" y="879" width="10" height="33" fill="#313828" rx="2"/>
<rect x="1186" y="879" width="10" height="33" fill="#323827" rx="2"/>
<rect x="1198" y="879" width="10" height="33" fill="#323827" rx="2"/>
<rect x="1210" y="879" width="10" height="33" fill="#333927" rx="2"/>
<rect x="1222" y="879" width="10" height="33" fill="#343927" rx="2"/>
<rect x="1234" y="879" width="10" height="33" fill="#353927" rx="2"/>
<rect x="1246" y="879" width="10" height="33" fill="#353926" rx="2"/>
<rect x="1258" y="879" width="10" height="33" fill="#363926" rx="2"/>
<rect x="1270" y="879" width="10" height="33" fill="#373926" rx="2"/>
<rect x="1282" y="879" width="10" height="33" fill="#373926" rx="2"/>
<rect x="1294" y="879" width="10" height="33" fill="#383926" rx="2"/>
<rect x="1306" y="879" width="10" height="33" fill="#393925" rx="2"/>
<rect x="1318" y="879" width="10" height="33" fill="#393925" rx="2"/>
<rect x="1330" y="879" width="10" height="33" fill="#3a3925" rx="2"/>
<rect x="1342" y="879" width="10" height="33" fill="#3b3a25" rx="2"/>
<rect x="1354" y="879" width="10" height="33" fill="#3b3925" rx="2"/>
<rect x="1366" y="879" width="10" height="33" fill="#3b3925" rx="2"/>
<rect x="1378" y="879" width="10" height="33" fill="#3c3825" rx="2"/>
<rect x="1390" y="879" width="10" height="33" fill="#3c3725" rx="2"/>
<rect x="1402" y="879" width="10" height="33" fill="#3c3725" rx="2"/>
<rect x="1414" y="879" width="10" height="33" fill="#3c3625" rx="2"/>
<rect x="1426" y="879" width="10" height="33" fill="#3c3525" rx="2"/>
<rect x="1438" y="879" width="10" height="33" fill="#3c3525" rx="2"/>
<rect x="1450" y="879" width="10" height="33" fill="#3c3425" rx="2"/>
<rect x="1462" y="879" width="10" height="33" fill="#3c3425" rx="2"/>
<rect x="1474" y="879" width="10" height="33" fill="#3d3326" rx="2"/>
<rect x="1486" y="879" width="10" height="33" fill="#3d3226" rx="2"/>
<rect x="1498" y="879" width="10" height="33" fill="#3d3226" rx="2"/>
<rect x="1510" y="879" width="10" height="33" fill="#3d3126" rx="2"/>
<rect x="1522" y="879" width="10" height="33" fill="#3d3026" rx="2"/>
<rect x="1534" y="879" width="10" height="33" fill="#3d3026" rx="2"/>
<rect x="1546" y="879" width="10" height="33" fill="#3d2f26" rx="2"/>
<rect x="1558" y="879" width="10" height="33" fill="#3d2e26" rx="2"/>
<rect x="1570" y="879" width="10" height="33" fill="#3e2e26" rx="2"/>
<rect x="1582" y="879" width="10" height="33" fill="#3e2d26" rx="2"/>
<rect x="1594" y="879" width="10" height="33" fill="#3e2d26" rx="2"/>
<rect x="1606" y="879" width="10" height="33" fill="#3e2c26" rx="2"/>
<rect x="1618" y="879" width="10" height="33" fill="#3e2b26" rx="2"/>
<rect x="1630" y="879" width="10" height="33" fill="#3e2b26" rx="2"/>
<rect x="1642" y="879" width="10" height="33" fill="#3e2a27" rx="2"/>
<rect x="1654" y="879" width="10" height="33" fill="#3e2927" rx="2"/>
<rect x="1666" y="879" width="10" height="33" fill="#3f2927" rx="2"/>
<rect x="1678" y="879" width="10" height="33" fill="#3f2827" rx="2"/>
<rect x="1690" y="879" width="10" height="33" fill="#3f2827" rx="2"/>
<rect x="1702" y="879" width="10" height="33" fill="#3f2727" rx="2"/>
<rect x="1714" y="879" width="10" height="33" fill="#3f2627" rx="2"/>
<rect x="1726" y="879" width="10" height="33" fill="#3f2627" rx="2"/>
<text x="1828.5" y="907" font-size="33" fill="#9cc25a" stroke="#9cc25a" stroke-width="0.35" text-anchor="middle" letter-spacing="0">165<tspan font-size="19" dx="6" stroke-width="0.2">MiB</tspan></text>
</svg>
</body></html>
